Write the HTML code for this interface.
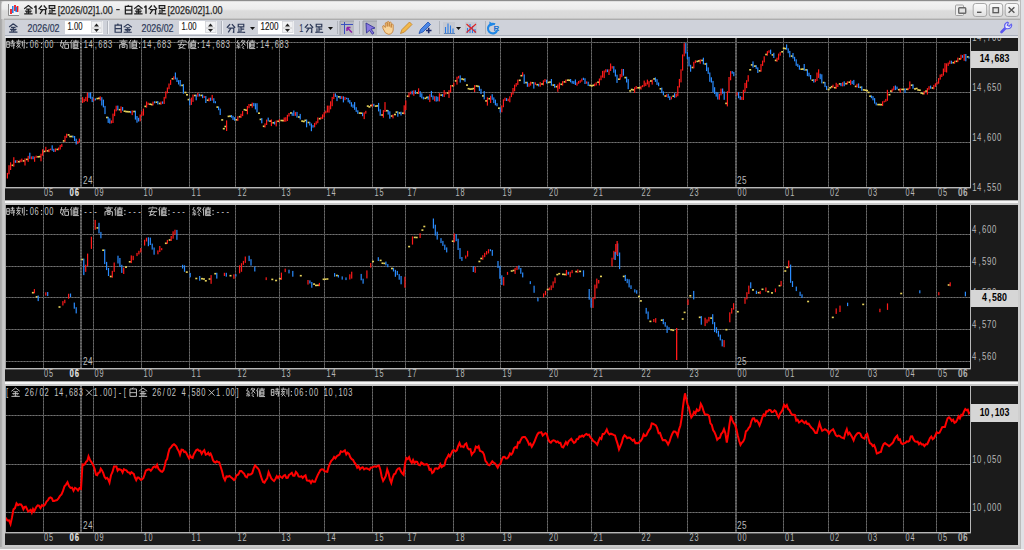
<!DOCTYPE html>
<html><head><meta charset="utf-8"><style>
html,body{margin:0;padding:0;width:1024px;height:550px;overflow:hidden;background:#d0d0d0;font-family:"Liberation Sans",sans-serif;}
svg{display:block}
</style></head><body>
<svg width="1024" height="550" viewBox="0 0 1024 550">
<defs>
<linearGradient id="tg" x1="0" y1="0" x2="0" y2="1">
<stop offset="0" stop-color="#d4d4d4"/><stop offset="0.07" stop-color="#f2f2f2"/><stop offset="0.45" stop-color="#ececec"/><stop offset="0.55" stop-color="#dcdcdc"/><stop offset="1" stop-color="#d8d8d8"/>
</linearGradient>
<linearGradient id="bg" x1="0" y1="0" x2="0" y2="1">
<stop offset="0" stop-color="#fcfcfc"/><stop offset="0.5" stop-color="#efefef"/><stop offset="1" stop-color="#dedede"/>
</linearGradient>
<clipPath id="c1"><rect x="6" y="38" width="964" height="149"/></clipPath>
<clipPath id="c2"><rect x="6" y="205" width="964" height="163"/></clipPath>
<clipPath id="c3"><rect x="6" y="386" width="964" height="146"/></clipPath>
</defs>

<rect x="0" y="0" width="1024" height="550" fill="#d0d0d0"/>
<rect x="0" y="0" width="1.5" height="548" fill="#a8a8a8"/>
<rect x="1.5" y="19" width="3.5" height="529" fill="#c8c8c8"/>
<rect x="1.5" y="19" width="0.6" height="529" fill="#9a9a9a"/>
<rect x="0" y="0" width="1018" height="1" fill="#8c8c8c"/>
<rect x="1020" y="0" width="1" height="550" fill="#bcbcbc"/>
<rect x="1021" y="0" width="3" height="550" fill="#e0e1e5"/>
<rect x="5" y="545" width="1015" height="2" fill="#cacaca"/>
<rect x="0" y="547" width="1020" height="2" fill="#c0c0c0"/>
<rect x="0" y="549" width="1024" height="1" fill="#f6f6f6"/>
<path d="M1.5 5Q1.5 1 5 1H1020V19H1.5Z" fill="url(#tg)"/>
<rect x="4" y="18" width="1016" height="1" fill="#c6c6c6"/>
<rect x="4" y="19" width="1016" height="1" fill="#adadad"/>
<rect x="9" y="4" width="10" height="11" fill="#f2f4f6"/>
<path d="M8.5 4V15.5H19" fill="none" stroke="#8a8a8a" stroke-width="1"/>
<path d="M11 9V14M15 5V11M17.5 6V12" stroke="#ee1c24" stroke-width="1.8"/>
<path d="M12.8 6V13M16.2 7V12" stroke="#1a80e8" stroke-width="1.5"/>
<path transform="translate(23.75,5.05) scale(0.930)" d="M5 0.5L0.5 4M5 0.5L9.5 4M2.5 4.5H7.5M1.5 6.5H8.5M5 4.5V9.5M3 7.3L3.6 8.5M7 7.3L6.4 8.5M0.5 9.5H9.5" fill="none" stroke="#1e1e1e" stroke-width="1.34"/>
<path d="M36 5.6V13.8M34.3 7.4L36 5.8" stroke="#1e1e1e" stroke-width="1.4" fill="none"/>
<path transform="translate(38.15,5.05) scale(0.930)" d="M4 0.5L0.5 4.5M6 0.5L9.5 4.5M2 5H8V9.5L7 9M5 5L2 9.5" fill="none" stroke="#1e1e1e" stroke-width="1.34"/>
<path transform="translate(47.35,5.05) scale(0.930)" d="M2 0.7H8V3.5H2ZM5 3.5V8.5M5 6H8.5M2.8 5V8.5M1 9.5C3 9 6 9.5 9.5 9.5" fill="none" stroke="#1e1e1e" stroke-width="1.34"/>
<text x="57.8" y="13.6" font-family="Liberation Sans" font-size="11.5" fill="#1e1e1e" stroke="#1e1e1e" stroke-width="0.25" textLength="55" lengthAdjust="spacingAndGlyphs">[2026/02]1.00</text>
<rect x="116.2" y="9.1" width="3.5" height="1.1" fill="#1e1e1e"/>
<path transform="translate(123.95,5.05) scale(0.930)" d="M5 0L4 1.5M1.5 1.5H8.5V9.5H1.5ZM1.5 5.5H8.5" fill="none" stroke="#1e1e1e" stroke-width="1.34"/>
<path transform="translate(133.75,5.05) scale(0.930)" d="M5 0.5L0.5 4M5 0.5L9.5 4M2.5 4.5H7.5M1.5 6.5H8.5M5 4.5V9.5M3 7.3L3.6 8.5M7 7.3L6.4 8.5M0.5 9.5H9.5" fill="none" stroke="#1e1e1e" stroke-width="1.34"/>
<path d="M146 5.6V13.8M144.3 7.4L146 5.8" stroke="#1e1e1e" stroke-width="1.4" fill="none"/>
<path transform="translate(148.15,5.05) scale(0.930)" d="M4 0.5L0.5 4.5M6 0.5L9.5 4.5M2 5H8V9.5L7 9M5 5L2 9.5" fill="none" stroke="#1e1e1e" stroke-width="1.34"/>
<path transform="translate(157.35,5.05) scale(0.930)" d="M2 0.7H8V3.5H2ZM5 3.5V8.5M5 6H8.5M2.8 5V8.5M1 9.5C3 9 6 9.5 9.5 9.5" fill="none" stroke="#1e1e1e" stroke-width="1.34"/>
<text x="167.6" y="13.6" font-family="Liberation Sans" font-size="11.5" fill="#1e1e1e" stroke="#1e1e1e" stroke-width="0.25" textLength="55" lengthAdjust="spacingAndGlyphs">[2026/02]1.00</text>
<rect x="955.5" y="5" width="8" height="10.5" rx="1" fill="#eeeeee" stroke="#9a9a9a" stroke-width="0.9"/>
<rect x="958.7" y="7.7" width="7" height="5.6" rx="0.8" fill="#e2e2e2" stroke="#6a6a6a" stroke-width="1.4"/>
<rect x="973.2" y="3.5" width="13.5" height="13" rx="2.5" fill="url(#bg)" stroke="#a8a8a8"/>
<rect x="989.2" y="3.5" width="13.5" height="13" rx="2.5" fill="url(#bg)" stroke="#a8a8a8"/>
<rect x="1005.2" y="3.5" width="13.5" height="13" rx="2.5" fill="url(#bg)" stroke="#a8a8a8"/>
<rect x="977" y="11.6" width="4.5" height="1.4" fill="#555"/>
<rect x="993" y="7.7" width="5.5" height="5" fill="#e4e4e4" stroke="#585858" stroke-width="1.3"/>
<path d="M1008.6 7.2L1014.4 12.8M1014.4 7.2L1008.6 12.8" stroke="#555" stroke-width="1.4"/>
<rect x="5" y="20" width="1013" height="15" fill="#cfd2da"/>
<rect x="5" y="35" width="1013" height="1" fill="#aab0bc"/>
<rect x="5" y="36" width="1013" height="2" fill="#e2e4e8"/>
<rect x="1018" y="20" width="2" height="525" fill="#cfcfcf"/>
<path transform="translate(8.70,23.30) scale(0.920)" d="M5 0.5L0.5 4M5 0.5L9.5 4M2.5 4.5H7.5M1.5 6.5H8.5M5 4.5V9.5M3 7.3L3.6 8.5M7 7.3L6.4 8.5M0.5 9.5H9.5" fill="none" stroke="#2e3a58" stroke-width="1.30"/>
<text x="27.5" y="32.3" font-family="Liberation Sans" font-size="10" fill="#2e3a58" stroke="#2e3a58" stroke-width="0.2" textLength="32" lengthAdjust="spacingAndGlyphs">2026/02</text>
<rect x="65" y="21" width="38" height="13" fill="#ffffff"/>
<rect x="91.5" y="21.5" width="10.5" height="11" fill="#f0f1f3" stroke="#d0d2d6" stroke-width="0.8"/>
<path d="M94 26.5L96.5 23.5L99 26.5Z" fill="#222"/><path d="M94 29L96.5 32L99 29Z" fill="#222"/>
<rect x="92" y="27.5" width="9" height="1" fill="#c8c8c8"/>
<text x="67.5" y="30.0" font-family="Liberation Sans" font-size="10" fill="#151515" stroke="#151515" stroke-width="0.15" textLength="15" lengthAdjust="spacingAndGlyphs">1.00</text>
<rect x="107" y="21" width="1" height="13" fill="#b0b4bc"/><rect x="108" y="21" width="1" height="13" fill="#eef0f4"/>
<path transform="translate(113.75,23.70) scale(0.900)" d="M5 0L4 1.5M1.5 1.5H8.5V9.5H1.5ZM1.5 5.5H8.5" fill="none" stroke="#2e3a58" stroke-width="1.33"/>
<path transform="translate(123.25,23.70) scale(0.900)" d="M5 0.5L0.5 4M5 0.5L9.5 4M2.5 4.5H7.5M1.5 6.5H8.5M5 4.5V9.5M3 7.3L3.6 8.5M7 7.3L6.4 8.5M0.5 9.5H9.5" fill="none" stroke="#2e3a58" stroke-width="1.33"/>
<text x="141.5" y="32.3" font-family="Liberation Sans" font-size="10" fill="#2e3a58" stroke="#2e3a58" stroke-width="0.2" textLength="32" lengthAdjust="spacingAndGlyphs">2026/02</text>
<rect x="179" y="21" width="38" height="13" fill="#ffffff"/>
<rect x="205.5" y="21.5" width="10.5" height="11" fill="#f0f1f3" stroke="#d0d2d6" stroke-width="0.8"/>
<path d="M208 26.5L210.5 23.5L213 26.5Z" fill="#222"/><path d="M208 29L210.5 32L213 29Z" fill="#222"/>
<rect x="206" y="27.5" width="9" height="1" fill="#c8c8c8"/>
<text x="181.5" y="30.0" font-family="Liberation Sans" font-size="10" fill="#151515" stroke="#151515" stroke-width="0.15" textLength="15" lengthAdjust="spacingAndGlyphs">1.00</text>
<rect x="221" y="21" width="1" height="13" fill="#b0b4bc"/><rect x="222" y="21" width="1" height="13" fill="#eef0f4"/>
<path transform="translate(226.40,23.60) scale(0.920)" d="M4 0.5L0.5 4.5M6 0.5L9.5 4.5M2 5H8V9.5L7 9M5 5L2 9.5" fill="none" stroke="#2e3a58" stroke-width="1.30"/>
<path transform="translate(236.40,23.60) scale(0.920)" d="M2 0.7H8V3.5H2ZM5 3.5V8.5M5 6H8.5M2.8 5V8.5M1 9.5C3 9 6 9.5 9.5 9.5" fill="none" stroke="#2e3a58" stroke-width="1.30"/>
<path d="M250 27L255 27L252.5 30Z" fill="#111"/>
<rect x="258" y="21" width="36" height="13" fill="#ffffff"/>
<rect x="282.5" y="21.5" width="10.5" height="11" fill="#f0f1f3" stroke="#d0d2d6" stroke-width="0.8"/>
<path d="M285 26.5L287.5 23.5L290 26.5Z" fill="#222"/><path d="M285 29L287.5 32L290 29Z" fill="#222"/>
<rect x="283" y="27.5" width="9" height="1" fill="#c8c8c8"/>
<text x="260.5" y="30.0" font-family="Liberation Sans" font-size="10" fill="#151515" stroke="#151515" stroke-width="0.15" textLength="18" lengthAdjust="spacingAndGlyphs">1200</text>
<text x="299.5" y="32.3" font-family="Liberation Sans" font-size="10" fill="#2e3a58" stroke="#2e3a58" stroke-width="0.2" textLength="3.6" lengthAdjust="spacingAndGlyphs">1</text>
<path transform="translate(304.40,23.60) scale(0.920)" d="M4 0.5L0.5 4.5M6 0.5L9.5 4.5M2 5H8V9.5L7 9M5 5L2 9.5" fill="none" stroke="#2e3a58" stroke-width="1.30"/>
<path transform="translate(314.40,23.60) scale(0.920)" d="M2 0.7H8V3.5H2ZM5 3.5V8.5M5 6H8.5M2.8 5V8.5M1 9.5C3 9 6 9.5 9.5 9.5" fill="none" stroke="#2e3a58" stroke-width="1.30"/>
<path d="M328 27L333 27L330.5 30Z" fill="#111"/>
<rect x="337" y="21" width="1" height="13" fill="#b0b4bc"/>
<rect x="340" y="21" width="14" height="14" fill="#b9bcc4"/><path d="M340 35V21H354" fill="none" stroke="#9a9ea6" stroke-width="1"/>
<path d="M344.5 22V34M341 24.5H353" stroke="#3a50c0" stroke-width="1"/><path d="M347 27.5L352 32.5M347 27.5H350.5M347 27.5V31" stroke="#9020a8" stroke-width="1.5"/>
<rect x="359" y="21" width="1" height="13" fill="#b0b4bc"/>
<rect x="363" y="21" width="14" height="14" fill="#b9bcc4"/><path d="M363 35V21H377" fill="none" stroke="#9a9ea6" stroke-width="1"/>
<path d="M366 23L375 28L371 29.2L374 33L372.3 34.2L369.5 30.3L366.5 33Z" fill="#8878e0" stroke="#2a2a90" stroke-width="0.8"/>
<path d="M383 28.5Q382 25 384 25.5L385.3 27.5V23Q386.2 21.8 387.2 23V26.5V22Q388.2 20.8 389.2 22V26.5V22.6Q390.2 21.5 391.2 22.6V27.5V24.6Q392.2 23.5 393.2 24.6V30Q392.5 34.3 388.5 34.3Q385 34.3 383 28.5Z" fill="#f8d49a" stroke="#c07a30" stroke-width="0.8"/>
<path d="M400.5 33.5L402 29.5L409.5 22L412 24.5L404.5 32Z" fill="#f2b84a" stroke="#c0802a" stroke-width="0.8"/>
<path d="M419 33.5L420.5 29.5L428 22L430.5 24.5L423 32Z" fill="#4a86e6" stroke="#2050b0" stroke-width="0.8"/><path d="M426 30.5H431.5M428.7 27.8V33.2" stroke="#1a2a70" stroke-width="1.6"/>
<rect x="439" y="21" width="1" height="13" fill="#b0b4bc"/>
<rect x="443" y="22" width="12" height="12" fill="#c6c9d1"/>
<path d="M445.5 33V27M448 33V23.5M450.5 33V25.5M453 33V28.5" stroke="#2a7ae6" stroke-width="1.1"/><path d="M444 33.5H455" stroke="#4070b0" stroke-width="0.8"/>
<path d="M456 27L461 27L458.5 30Z" fill="#111"/>
<rect x="465" y="22" width="12" height="12" fill="#c6c9d1"/>
<path d="M467.5 33V28M470 33V24M472.5 33V26M475 33V29" stroke="#2a7ae6" stroke-width="1.1"/><path d="M466.5 24L476 32.5M476 24L466.5 32.5" stroke="#e02424" stroke-width="1.1"/>
<rect x="485" y="21" width="1" height="13" fill="#b0b4bc"/>
<path d="M495 24.3A4.8 4.8 0 1 0 497.3 30.2" fill="none" stroke="#2088e6" stroke-width="2.1"/><path d="M489.3 21.5L494.5 24.7L489.7 26.5Z" fill="#2088e6"/>
<text x="493.6" y="31" font-family="Liberation Sans" font-size="8" font-weight="bold" fill="#2070d0">R</text>
<path d="M1001.5 32L1006.5 27" stroke="#5a56f0" stroke-width="2.6" stroke-linecap="round"/><path d="M1005.3 28.2Q1003.3 24.2 1007.2 22.2L1008.3 22.7L1007.3 25.2L1009.2 26.2L1011.2 24.2L1011.7 25.2Q1011.2 29.2 1006.7 28.7Z" fill="#ececff" stroke="#6060f0" stroke-width="1.2"/>
<rect x="5" y="200" width="1013" height="1" fill="#b0b0b0"/><rect x="5" y="201" width="1013" height="2" fill="#f6f6f6"/><rect x="5" y="203" width="1013" height="2" fill="#c6c6c6"/>
<rect x="5" y="381" width="1013" height="1" fill="#a8a8a8"/><rect x="5" y="382" width="1013" height="2" fill="#f6f6f6"/><rect x="5" y="384" width="1013" height="2" fill="#c6c6c6"/>
<rect x="5" y="38" width="1013" height="162" fill="#1b1b1b"/>
<rect x="6" y="38" width="964" height="149" fill="#000"/>
<g shape-rendering="crispEdges" stroke-width="1">
<line x1="6" y1="42.5" x2="970" y2="42.5" stroke="#525252"/>
<line x1="6" y1="42.5" x2="970" y2="42.5" stroke="#707070" stroke-dasharray="1 2"/>
<line x1="6" y1="92.5" x2="970" y2="92.5" stroke="#525252"/>
<line x1="6" y1="92.5" x2="970" y2="92.5" stroke="#707070" stroke-dasharray="1 2"/>
<line x1="6" y1="142.5" x2="970" y2="142.5" stroke="#525252"/>
<line x1="6" y1="142.5" x2="970" y2="142.5" stroke="#707070" stroke-dasharray="1 2"/>
<line x1="43.5" y1="38" x2="43.5" y2="187" stroke="#525252"/>
<line x1="43.5" y1="38" x2="43.5" y2="187" stroke="#6c6c6c" stroke-dasharray="1 2"/>
<line x1="93.5" y1="38" x2="93.5" y2="187" stroke="#525252"/>
<line x1="93.5" y1="38" x2="93.5" y2="187" stroke="#6c6c6c" stroke-dasharray="1 2"/>
<line x1="141.5" y1="38" x2="141.5" y2="187" stroke="#525252"/>
<line x1="141.5" y1="38" x2="141.5" y2="187" stroke="#6c6c6c" stroke-dasharray="1 2"/>
<line x1="189.5" y1="38" x2="189.5" y2="187" stroke="#525252"/>
<line x1="189.5" y1="38" x2="189.5" y2="187" stroke="#6c6c6c" stroke-dasharray="1 2"/>
<line x1="235.5" y1="38" x2="235.5" y2="187" stroke="#525252"/>
<line x1="235.5" y1="38" x2="235.5" y2="187" stroke="#6c6c6c" stroke-dasharray="1 2"/>
<line x1="279.5" y1="38" x2="279.5" y2="187" stroke="#525252"/>
<line x1="279.5" y1="38" x2="279.5" y2="187" stroke="#6c6c6c" stroke-dasharray="1 2"/>
<line x1="324.5" y1="38" x2="324.5" y2="187" stroke="#525252"/>
<line x1="324.5" y1="38" x2="324.5" y2="187" stroke="#6c6c6c" stroke-dasharray="1 2"/>
<line x1="372.5" y1="38" x2="372.5" y2="187" stroke="#525252"/>
<line x1="372.5" y1="38" x2="372.5" y2="187" stroke="#6c6c6c" stroke-dasharray="1 2"/>
<line x1="405.5" y1="38" x2="405.5" y2="187" stroke="#525252"/>
<line x1="405.5" y1="38" x2="405.5" y2="187" stroke="#6c6c6c" stroke-dasharray="1 2"/>
<line x1="453.5" y1="38" x2="453.5" y2="187" stroke="#525252"/>
<line x1="453.5" y1="38" x2="453.5" y2="187" stroke="#6c6c6c" stroke-dasharray="1 2"/>
<line x1="500.5" y1="38" x2="500.5" y2="187" stroke="#525252"/>
<line x1="500.5" y1="38" x2="500.5" y2="187" stroke="#6c6c6c" stroke-dasharray="1 2"/>
<line x1="547.5" y1="38" x2="547.5" y2="187" stroke="#525252"/>
<line x1="547.5" y1="38" x2="547.5" y2="187" stroke="#6c6c6c" stroke-dasharray="1 2"/>
<line x1="591.5" y1="38" x2="591.5" y2="187" stroke="#525252"/>
<line x1="591.5" y1="38" x2="591.5" y2="187" stroke="#6c6c6c" stroke-dasharray="1 2"/>
<line x1="639.5" y1="38" x2="639.5" y2="187" stroke="#525252"/>
<line x1="639.5" y1="38" x2="639.5" y2="187" stroke="#6c6c6c" stroke-dasharray="1 2"/>
<line x1="687.5" y1="38" x2="687.5" y2="187" stroke="#525252"/>
<line x1="687.5" y1="38" x2="687.5" y2="187" stroke="#6c6c6c" stroke-dasharray="1 2"/>
<line x1="783.5" y1="38" x2="783.5" y2="187" stroke="#525252"/>
<line x1="783.5" y1="38" x2="783.5" y2="187" stroke="#6c6c6c" stroke-dasharray="1 2"/>
<line x1="828.5" y1="38" x2="828.5" y2="187" stroke="#525252"/>
<line x1="828.5" y1="38" x2="828.5" y2="187" stroke="#6c6c6c" stroke-dasharray="1 2"/>
<line x1="866.5" y1="38" x2="866.5" y2="187" stroke="#525252"/>
<line x1="866.5" y1="38" x2="866.5" y2="187" stroke="#6c6c6c" stroke-dasharray="1 2"/>
<line x1="903.5" y1="38" x2="903.5" y2="187" stroke="#525252"/>
<line x1="903.5" y1="38" x2="903.5" y2="187" stroke="#6c6c6c" stroke-dasharray="1 2"/>
<line x1="936.5" y1="38" x2="936.5" y2="187" stroke="#525252"/>
<line x1="936.5" y1="38" x2="936.5" y2="187" stroke="#6c6c6c" stroke-dasharray="1 2"/>
<rect x="80" y="38" width="2" height="149" fill="#4e4e4e"/>
<line x1="81" y1="38" x2="81" y2="187" stroke="#686868" stroke-width="2" stroke-dasharray="1 2"/>
<rect x="735" y="38" width="2" height="149" fill="#4e4e4e"/>
<line x1="736" y1="38" x2="736" y2="187" stroke="#686868" stroke-width="2" stroke-dasharray="1 2"/>
</g>
<rect x="5" y="38" width="1" height="149" fill="#a4a4a4"/>
<rect x="5" y="188" width="966" height="1" fill="#5a5a5a"/>
<rect x="5" y="187" width="966" height="1" fill="#b8b8b8"/><rect x="970" y="38" width="1" height="150" fill="#b8b8b8"/>
<text transform="translate(43.50,195.70) scale(0.7,1)" x="0.58 7.86" y="0" font-family="Liberation Sans" font-size="10.5" fill="#b8b8b8" xml:space="preserve">05</text>
<text transform="translate(69.00,195.70) scale(0.7,1)" x="0.58 7.86" y="0" font-family="Liberation Sans" font-size="10.5" fill="#b8b8b8" xml:space="preserve">06</text>
<text transform="translate(94.00,195.70) scale(0.7,1)" x="0.58 7.86" y="0" font-family="Liberation Sans" font-size="10.5" fill="#b8b8b8" xml:space="preserve">09</text>
<text transform="translate(143.00,195.70) scale(0.7,1)" x="0.79 7.86" y="0" font-family="Liberation Sans" font-size="10.5" fill="#b8b8b8" xml:space="preserve">10</text>
<text transform="translate(191.00,195.70) scale(0.7,1)" x="0.79 8.08" y="0" font-family="Liberation Sans" font-size="10.5" fill="#b8b8b8" xml:space="preserve">11</text>
<text transform="translate(237.00,195.70) scale(0.7,1)" x="0.79 7.86" y="0" font-family="Liberation Sans" font-size="10.5" fill="#b8b8b8" xml:space="preserve">12</text>
<text transform="translate(281.00,195.70) scale(0.7,1)" x="0.79 7.86" y="0" font-family="Liberation Sans" font-size="10.5" fill="#b8b8b8" xml:space="preserve">13</text>
<text transform="translate(326.00,195.70) scale(0.7,1)" x="0.79 7.86" y="0" font-family="Liberation Sans" font-size="10.5" fill="#b8b8b8" xml:space="preserve">14</text>
<text transform="translate(374.00,195.70) scale(0.7,1)" x="0.79 7.86" y="0" font-family="Liberation Sans" font-size="10.5" fill="#b8b8b8" xml:space="preserve">15</text>
<text transform="translate(407.00,195.70) scale(0.7,1)" x="0.79 7.86" y="0" font-family="Liberation Sans" font-size="10.5" fill="#b8b8b8" xml:space="preserve">17</text>
<text transform="translate(455.00,195.70) scale(0.7,1)" x="0.79 7.86" y="0" font-family="Liberation Sans" font-size="10.5" fill="#b8b8b8" xml:space="preserve">18</text>
<text transform="translate(502.00,195.70) scale(0.7,1)" x="0.79 7.86" y="0" font-family="Liberation Sans" font-size="10.5" fill="#b8b8b8" xml:space="preserve">19</text>
<text transform="translate(548.50,195.70) scale(0.7,1)" x="0.58 7.86" y="0" font-family="Liberation Sans" font-size="10.5" fill="#b8b8b8" xml:space="preserve">20</text>
<text transform="translate(593.00,195.70) scale(0.7,1)" x="0.58 8.08" y="0" font-family="Liberation Sans" font-size="10.5" fill="#b8b8b8" xml:space="preserve">21</text>
<text transform="translate(641.00,195.70) scale(0.7,1)" x="0.58 7.86" y="0" font-family="Liberation Sans" font-size="10.5" fill="#b8b8b8" xml:space="preserve">22</text>
<text transform="translate(689.00,195.70) scale(0.7,1)" x="0.58 7.86" y="0" font-family="Liberation Sans" font-size="10.5" fill="#b8b8b8" xml:space="preserve">23</text>
<text transform="translate(737.00,195.70) scale(0.7,1)" x="0.58 7.86" y="0" font-family="Liberation Sans" font-size="10.5" fill="#b8b8b8" xml:space="preserve">00</text>
<text transform="translate(784.50,195.70) scale(0.7,1)" x="0.58 8.08" y="0" font-family="Liberation Sans" font-size="10.5" fill="#b8b8b8" xml:space="preserve">01</text>
<text transform="translate(829.50,195.70) scale(0.7,1)" x="0.58 7.86" y="0" font-family="Liberation Sans" font-size="10.5" fill="#b8b8b8" xml:space="preserve">02</text>
<text transform="translate(867.50,195.70) scale(0.7,1)" x="0.58 7.86" y="0" font-family="Liberation Sans" font-size="10.5" fill="#b8b8b8" xml:space="preserve">03</text>
<text transform="translate(905.00,195.70) scale(0.7,1)" x="0.58 7.86" y="0" font-family="Liberation Sans" font-size="10.5" fill="#b8b8b8" xml:space="preserve">04</text>
<text transform="translate(937.50,195.70) scale(0.7,1)" x="0.58 7.86" y="0" font-family="Liberation Sans" font-size="10.5" fill="#b8b8b8" xml:space="preserve">05</text>
<text transform="translate(957.50,195.70) scale(0.7,1)" x="0.58 7.86" y="0" font-family="Liberation Sans" font-size="10.5" fill="#b8b8b8" xml:space="preserve">06</text>
<text transform="translate(69.40,195.70) scale(0.7,1)" x="0.58 7.86" y="0" font-family="Liberation Sans" font-size="10.5" fill="#dcdcdc" font-weight="bold" xml:space="preserve">06</text>
<text transform="translate(958.00,195.70) scale(0.7,1)" x="0.58 7.86" y="0" font-family="Liberation Sans" font-size="10.5" fill="#b8b8b8" xml:space="preserve">06</text>
<text transform="translate(82.50,184.00) scale(0.75,1)" x="0.53 7.20" y="0" font-family="Liberation Sans" font-size="11" fill="#b8b8b8" xml:space="preserve">24</text>
<text transform="translate(736.50,184.00) scale(0.75,1)" x="0.53 7.20" y="0" font-family="Liberation Sans" font-size="11" fill="#b8b8b8" xml:space="preserve">25</text>
<svg x="971" y="38" width="47" height="162" overflow="hidden">
<text transform="translate(0.70,3.00) scale(0.75,1)" x="0.73 7.20 15.67 20.53 27.20 33.87" y="0" font-family="Liberation Sans" font-size="10.3" fill="#b8b8b8" xml:space="preserve">14,700</text>
<text transform="translate(0.70,53.00) scale(0.75,1)" x="0.73 7.20 15.67 20.53 27.20 33.87" y="0" font-family="Liberation Sans" font-size="10.3" fill="#b8b8b8" xml:space="preserve">14,650</text>
<text transform="translate(0.70,103.00) scale(0.75,1)" x="0.73 7.20 15.67 20.53 27.20 33.87" y="0" font-family="Liberation Sans" font-size="10.3" fill="#b8b8b8" xml:space="preserve">14,600</text>
<text transform="translate(0.70,153.00) scale(0.75,1)" x="0.73 7.20 15.67 20.53 27.20 33.87" y="0" font-family="Liberation Sans" font-size="10.3" fill="#b8b8b8" xml:space="preserve">14,550</text>
</svg>
<rect x="971" y="51" width="47" height="17" fill="#d6d6d6"/>
<text transform="translate(979.20,62.40) scale(0.8,1)" x="0.69 6.75 14.69 19.25 25.50 31.75" y="0" font-family="Liberation Sans" font-size="11" fill="#000" font-weight="bold" xml:space="preserve">14,683</text>
<path transform="translate(6.05,39.55) scale(0.930)" d="M0.7 2H3.5V8.5H0.7ZM0.7 5H3.5M5 1.8H9M7 0.3V4M4.5 4H9.7M4.5 6H9.7M8.3 4.5V9.5L7.5 9.2M6 7L6.6 8" fill="none" stroke="#c4c4c4" stroke-width="1.02"/>
<path transform="translate(15.85,39.55) scale(0.930)" d="M3 0V1.5M0.5 1.8H6M3 2L1 4.5H5M4 3.5L0.5 8M2.5 6.5L5.5 9.5M4.5 5.5L1.5 9.5M7 1.5V7.5M9 0.3V9.5L8.2 9" fill="none" stroke="#c4c4c4" stroke-width="1.02"/>
<rect x="26.25" y="42.96" width="1.2" height="1.2" fill="#c4c4c4"/><rect x="26.25" y="46.70" width="1.2" height="1.2" fill="#c4c4c4"/>
<rect x="40.95" y="42.96" width="1.2" height="1.2" fill="#c4c4c4"/><rect x="40.95" y="46.70" width="1.2" height="1.2" fill="#c4c4c4"/>
<text transform="translate(25.40,48.00) scale(0.75,1)" x="-0.81 5.73 12.26 18.79 25.33 31.86 38.39" y="0" font-family="Liberation Sans" font-size="10" fill="#c4c4c4" xml:space="preserve"> 06 00 </text>
<path transform="translate(59.95,39.55) scale(0.930)" d="M2 0.5L0.5 7L4 9.5M0.3 3.5H4.2L2.5 9.5M6.5 0.5L5 3.5H9L8.5 2.5M5.2 5H9.2V9.5H5.2Z" fill="none" stroke="#c4c4c4" stroke-width="1.02"/>
<path transform="translate(69.75,39.55) scale(0.930)" d="M2.5 0.3L0.5 4M1.6 3V9.8M3.5 1.7H9.7M6.5 0.3V2.5M4.6 3H8.6V8.3H4.6ZM4.6 5H8.6M4.6 6.7H8.6M3.6 3V9.7H9.8" fill="none" stroke="#c4c4c4" stroke-width="1.02"/>
<rect x="80.15" y="42.96" width="1.2" height="1.2" fill="#c4c4c4"/><rect x="80.15" y="46.70" width="1.2" height="1.2" fill="#c4c4c4"/>
<text transform="translate(79.30,48.00) scale(0.75,1)" x="-0.81 5.93 12.26 20.59 25.33 31.86 38.39 44.93" y="0" font-family="Liberation Sans" font-size="10" fill="#c4c4c4" xml:space="preserve"> 14,683 </text>
<path transform="translate(118.75,39.55) scale(0.930)" d="M5 0V1.2M0.5 1.5H9.5M3 2.5H7V4.3H3ZM1 9.8V5.5H9V9.8L8.2 9.5M3.5 6.7H6.5V8.5H3.5Z" fill="none" stroke="#c4c4c4" stroke-width="1.02"/>
<path transform="translate(128.55,39.55) scale(0.930)" d="M2.5 0.3L0.5 4M1.6 3V9.8M3.5 1.7H9.7M6.5 0.3V2.5M4.6 3H8.6V8.3H4.6ZM4.6 5H8.6M4.6 6.7H8.6M3.6 3V9.7H9.8" fill="none" stroke="#c4c4c4" stroke-width="1.02"/>
<rect x="138.95" y="42.96" width="1.2" height="1.2" fill="#c4c4c4"/><rect x="138.95" y="46.70" width="1.2" height="1.2" fill="#c4c4c4"/>
<text transform="translate(138.10,48.00) scale(0.75,1)" x="-0.81 5.93 12.26 20.59 25.33 31.86 38.39 44.93" y="0" font-family="Liberation Sans" font-size="10" fill="#c4c4c4" xml:space="preserve"> 14,683 </text>
<path transform="translate(177.55,39.55) scale(0.930)" d="M5 0V1.2M0.8 3V1.5H9.2V3M0.3 5.5H9.7M4.5 2.5L2 8.3C5 8.8 7 9.3 8.5 9.8M7 5.5C6 8 4 9.2 1 9.8" fill="none" stroke="#c4c4c4" stroke-width="1.02"/>
<path transform="translate(187.35,39.55) scale(0.930)" d="M2.5 0.3L0.5 4M1.6 3V9.8M3.5 1.7H9.7M6.5 0.3V2.5M4.6 3H8.6V8.3H4.6ZM4.6 5H8.6M4.6 6.7H8.6M3.6 3V9.7H9.8" fill="none" stroke="#c4c4c4" stroke-width="1.02"/>
<rect x="197.75" y="42.96" width="1.2" height="1.2" fill="#c4c4c4"/><rect x="197.75" y="46.70" width="1.2" height="1.2" fill="#c4c4c4"/>
<text transform="translate(196.90,48.00) scale(0.75,1)" x="-0.81 5.93 12.26 20.59 25.33 31.86 38.39 44.93" y="0" font-family="Liberation Sans" font-size="10" fill="#c4c4c4" xml:space="preserve"> 14,683 </text>
<path transform="translate(236.35,39.55) scale(0.930)" d="M2 0.5L0.5 3.5L3 4L0.5 7H4.3M3 4.5L3.5 5.5M2.2 7V9.8M1 8L0.5 9.3M3.5 8L4 9.3M6.5 0.3L5 3M6 1.5H9.5L5.5 6.5M6.5 2.5L9.8 6.3M6.5 6.8L8 7.8M6 8.5L8.5 9.8" fill="none" stroke="#c4c4c4" stroke-width="1.02"/>
<path transform="translate(246.15,39.55) scale(0.930)" d="M2.5 0.3L0.5 4M1.6 3V9.8M3.5 1.7H9.7M6.5 0.3V2.5M4.6 3H8.6V8.3H4.6ZM4.6 5H8.6M4.6 6.7H8.6M3.6 3V9.7H9.8" fill="none" stroke="#c4c4c4" stroke-width="1.02"/>
<rect x="256.55" y="42.96" width="1.2" height="1.2" fill="#c4c4c4"/><rect x="256.55" y="46.70" width="1.2" height="1.2" fill="#c4c4c4"/>
<text transform="translate(255.70,48.00) scale(0.75,1)" x="-0.81 5.93 12.26 20.59 25.33 31.86 38.39" y="0" font-family="Liberation Sans" font-size="10" fill="#c4c4c4" xml:space="preserve"> 14,683</text>
<rect x="5" y="205" width="1013" height="176" fill="#1b1b1b"/>
<rect x="6" y="205" width="964" height="163" fill="#000"/>
<g shape-rendering="crispEdges" stroke-width="1">
<line x1="6" y1="234.5" x2="970" y2="234.5" stroke="#525252"/>
<line x1="6" y1="234.5" x2="970" y2="234.5" stroke="#707070" stroke-dasharray="1 2"/>
<line x1="6" y1="266.5" x2="970" y2="266.5" stroke="#525252"/>
<line x1="6" y1="266.5" x2="970" y2="266.5" stroke="#707070" stroke-dasharray="1 2"/>
<line x1="6" y1="297.5" x2="970" y2="297.5" stroke="#525252"/>
<line x1="6" y1="297.5" x2="970" y2="297.5" stroke="#707070" stroke-dasharray="1 2"/>
<line x1="6" y1="329.5" x2="970" y2="329.5" stroke="#525252"/>
<line x1="6" y1="329.5" x2="970" y2="329.5" stroke="#707070" stroke-dasharray="1 2"/>
<line x1="6" y1="361.5" x2="970" y2="361.5" stroke="#525252"/>
<line x1="6" y1="361.5" x2="970" y2="361.5" stroke="#707070" stroke-dasharray="1 2"/>
<line x1="43.5" y1="205" x2="43.5" y2="368" stroke="#525252"/>
<line x1="43.5" y1="205" x2="43.5" y2="368" stroke="#6c6c6c" stroke-dasharray="1 2"/>
<line x1="93.5" y1="205" x2="93.5" y2="368" stroke="#525252"/>
<line x1="93.5" y1="205" x2="93.5" y2="368" stroke="#6c6c6c" stroke-dasharray="1 2"/>
<line x1="141.5" y1="205" x2="141.5" y2="368" stroke="#525252"/>
<line x1="141.5" y1="205" x2="141.5" y2="368" stroke="#6c6c6c" stroke-dasharray="1 2"/>
<line x1="189.5" y1="205" x2="189.5" y2="368" stroke="#525252"/>
<line x1="189.5" y1="205" x2="189.5" y2="368" stroke="#6c6c6c" stroke-dasharray="1 2"/>
<line x1="235.5" y1="205" x2="235.5" y2="368" stroke="#525252"/>
<line x1="235.5" y1="205" x2="235.5" y2="368" stroke="#6c6c6c" stroke-dasharray="1 2"/>
<line x1="279.5" y1="205" x2="279.5" y2="368" stroke="#525252"/>
<line x1="279.5" y1="205" x2="279.5" y2="368" stroke="#6c6c6c" stroke-dasharray="1 2"/>
<line x1="324.5" y1="205" x2="324.5" y2="368" stroke="#525252"/>
<line x1="324.5" y1="205" x2="324.5" y2="368" stroke="#6c6c6c" stroke-dasharray="1 2"/>
<line x1="372.5" y1="205" x2="372.5" y2="368" stroke="#525252"/>
<line x1="372.5" y1="205" x2="372.5" y2="368" stroke="#6c6c6c" stroke-dasharray="1 2"/>
<line x1="405.5" y1="205" x2="405.5" y2="368" stroke="#525252"/>
<line x1="405.5" y1="205" x2="405.5" y2="368" stroke="#6c6c6c" stroke-dasharray="1 2"/>
<line x1="453.5" y1="205" x2="453.5" y2="368" stroke="#525252"/>
<line x1="453.5" y1="205" x2="453.5" y2="368" stroke="#6c6c6c" stroke-dasharray="1 2"/>
<line x1="500.5" y1="205" x2="500.5" y2="368" stroke="#525252"/>
<line x1="500.5" y1="205" x2="500.5" y2="368" stroke="#6c6c6c" stroke-dasharray="1 2"/>
<line x1="547.5" y1="205" x2="547.5" y2="368" stroke="#525252"/>
<line x1="547.5" y1="205" x2="547.5" y2="368" stroke="#6c6c6c" stroke-dasharray="1 2"/>
<line x1="591.5" y1="205" x2="591.5" y2="368" stroke="#525252"/>
<line x1="591.5" y1="205" x2="591.5" y2="368" stroke="#6c6c6c" stroke-dasharray="1 2"/>
<line x1="639.5" y1="205" x2="639.5" y2="368" stroke="#525252"/>
<line x1="639.5" y1="205" x2="639.5" y2="368" stroke="#6c6c6c" stroke-dasharray="1 2"/>
<line x1="687.5" y1="205" x2="687.5" y2="368" stroke="#525252"/>
<line x1="687.5" y1="205" x2="687.5" y2="368" stroke="#6c6c6c" stroke-dasharray="1 2"/>
<line x1="783.5" y1="205" x2="783.5" y2="368" stroke="#525252"/>
<line x1="783.5" y1="205" x2="783.5" y2="368" stroke="#6c6c6c" stroke-dasharray="1 2"/>
<line x1="828.5" y1="205" x2="828.5" y2="368" stroke="#525252"/>
<line x1="828.5" y1="205" x2="828.5" y2="368" stroke="#6c6c6c" stroke-dasharray="1 2"/>
<line x1="866.5" y1="205" x2="866.5" y2="368" stroke="#525252"/>
<line x1="866.5" y1="205" x2="866.5" y2="368" stroke="#6c6c6c" stroke-dasharray="1 2"/>
<line x1="903.5" y1="205" x2="903.5" y2="368" stroke="#525252"/>
<line x1="903.5" y1="205" x2="903.5" y2="368" stroke="#6c6c6c" stroke-dasharray="1 2"/>
<line x1="936.5" y1="205" x2="936.5" y2="368" stroke="#525252"/>
<line x1="936.5" y1="205" x2="936.5" y2="368" stroke="#6c6c6c" stroke-dasharray="1 2"/>
<rect x="80" y="205" width="2" height="163" fill="#4e4e4e"/>
<line x1="81" y1="205" x2="81" y2="368" stroke="#686868" stroke-width="2" stroke-dasharray="1 2"/>
<rect x="735" y="205" width="2" height="163" fill="#4e4e4e"/>
<line x1="736" y1="205" x2="736" y2="368" stroke="#686868" stroke-width="2" stroke-dasharray="1 2"/>
</g>
<rect x="5" y="205" width="1" height="163" fill="#a4a4a4"/>
<rect x="5" y="369" width="966" height="1" fill="#5a5a5a"/>
<rect x="5" y="368" width="966" height="1" fill="#b8b8b8"/><rect x="970" y="205" width="1" height="164" fill="#b8b8b8"/>
<text transform="translate(43.50,376.70) scale(0.7,1)" x="0.58 7.86" y="0" font-family="Liberation Sans" font-size="10.5" fill="#b8b8b8" xml:space="preserve">05</text>
<text transform="translate(69.00,376.70) scale(0.7,1)" x="0.58 7.86" y="0" font-family="Liberation Sans" font-size="10.5" fill="#b8b8b8" xml:space="preserve">06</text>
<text transform="translate(94.00,376.70) scale(0.7,1)" x="0.58 7.86" y="0" font-family="Liberation Sans" font-size="10.5" fill="#b8b8b8" xml:space="preserve">09</text>
<text transform="translate(143.00,376.70) scale(0.7,1)" x="0.79 7.86" y="0" font-family="Liberation Sans" font-size="10.5" fill="#b8b8b8" xml:space="preserve">10</text>
<text transform="translate(191.00,376.70) scale(0.7,1)" x="0.79 8.08" y="0" font-family="Liberation Sans" font-size="10.5" fill="#b8b8b8" xml:space="preserve">11</text>
<text transform="translate(237.00,376.70) scale(0.7,1)" x="0.79 7.86" y="0" font-family="Liberation Sans" font-size="10.5" fill="#b8b8b8" xml:space="preserve">12</text>
<text transform="translate(281.00,376.70) scale(0.7,1)" x="0.79 7.86" y="0" font-family="Liberation Sans" font-size="10.5" fill="#b8b8b8" xml:space="preserve">13</text>
<text transform="translate(326.00,376.70) scale(0.7,1)" x="0.79 7.86" y="0" font-family="Liberation Sans" font-size="10.5" fill="#b8b8b8" xml:space="preserve">14</text>
<text transform="translate(374.00,376.70) scale(0.7,1)" x="0.79 7.86" y="0" font-family="Liberation Sans" font-size="10.5" fill="#b8b8b8" xml:space="preserve">15</text>
<text transform="translate(407.00,376.70) scale(0.7,1)" x="0.79 7.86" y="0" font-family="Liberation Sans" font-size="10.5" fill="#b8b8b8" xml:space="preserve">17</text>
<text transform="translate(455.00,376.70) scale(0.7,1)" x="0.79 7.86" y="0" font-family="Liberation Sans" font-size="10.5" fill="#b8b8b8" xml:space="preserve">18</text>
<text transform="translate(502.00,376.70) scale(0.7,1)" x="0.79 7.86" y="0" font-family="Liberation Sans" font-size="10.5" fill="#b8b8b8" xml:space="preserve">19</text>
<text transform="translate(548.50,376.70) scale(0.7,1)" x="0.58 7.86" y="0" font-family="Liberation Sans" font-size="10.5" fill="#b8b8b8" xml:space="preserve">20</text>
<text transform="translate(593.00,376.70) scale(0.7,1)" x="0.58 8.08" y="0" font-family="Liberation Sans" font-size="10.5" fill="#b8b8b8" xml:space="preserve">21</text>
<text transform="translate(641.00,376.70) scale(0.7,1)" x="0.58 7.86" y="0" font-family="Liberation Sans" font-size="10.5" fill="#b8b8b8" xml:space="preserve">22</text>
<text transform="translate(689.00,376.70) scale(0.7,1)" x="0.58 7.86" y="0" font-family="Liberation Sans" font-size="10.5" fill="#b8b8b8" xml:space="preserve">23</text>
<text transform="translate(737.00,376.70) scale(0.7,1)" x="0.58 7.86" y="0" font-family="Liberation Sans" font-size="10.5" fill="#b8b8b8" xml:space="preserve">00</text>
<text transform="translate(784.50,376.70) scale(0.7,1)" x="0.58 8.08" y="0" font-family="Liberation Sans" font-size="10.5" fill="#b8b8b8" xml:space="preserve">01</text>
<text transform="translate(829.50,376.70) scale(0.7,1)" x="0.58 7.86" y="0" font-family="Liberation Sans" font-size="10.5" fill="#b8b8b8" xml:space="preserve">02</text>
<text transform="translate(867.50,376.70) scale(0.7,1)" x="0.58 7.86" y="0" font-family="Liberation Sans" font-size="10.5" fill="#b8b8b8" xml:space="preserve">03</text>
<text transform="translate(905.00,376.70) scale(0.7,1)" x="0.58 7.86" y="0" font-family="Liberation Sans" font-size="10.5" fill="#b8b8b8" xml:space="preserve">04</text>
<text transform="translate(937.50,376.70) scale(0.7,1)" x="0.58 7.86" y="0" font-family="Liberation Sans" font-size="10.5" fill="#b8b8b8" xml:space="preserve">05</text>
<text transform="translate(957.50,376.70) scale(0.7,1)" x="0.58 7.86" y="0" font-family="Liberation Sans" font-size="10.5" fill="#b8b8b8" xml:space="preserve">06</text>
<text transform="translate(69.40,376.70) scale(0.7,1)" x="0.58 7.86" y="0" font-family="Liberation Sans" font-size="10.5" fill="#dcdcdc" font-weight="bold" xml:space="preserve">06</text>
<text transform="translate(958.00,376.70) scale(0.7,1)" x="0.58 7.86" y="0" font-family="Liberation Sans" font-size="10.5" fill="#b8b8b8" xml:space="preserve">06</text>
<text transform="translate(82.50,365.00) scale(0.75,1)" x="0.53 7.20" y="0" font-family="Liberation Sans" font-size="11" fill="#b8b8b8" xml:space="preserve">24</text>
<text transform="translate(736.50,365.00) scale(0.75,1)" x="0.53 7.20" y="0" font-family="Liberation Sans" font-size="11" fill="#b8b8b8" xml:space="preserve">25</text>
<svg x="971" y="205" width="47" height="176" overflow="hidden">
<text transform="translate(0.70,28.00) scale(0.75,1)" x="0.53 9.00 13.87 20.53 27.20" y="0" font-family="Liberation Sans" font-size="10.3" fill="#b8b8b8" xml:space="preserve">4,600</text>
<text transform="translate(0.70,60.00) scale(0.75,1)" x="0.53 9.00 13.87 20.53 27.20" y="0" font-family="Liberation Sans" font-size="10.3" fill="#b8b8b8" xml:space="preserve">4,590</text>
<text transform="translate(0.70,91.00) scale(0.75,1)" x="0.53 9.00 13.87 20.53 27.20" y="0" font-family="Liberation Sans" font-size="10.3" fill="#b8b8b8" xml:space="preserve">4,580</text>
<text transform="translate(0.70,123.00) scale(0.75,1)" x="0.53 9.00 13.87 20.53 27.20" y="0" font-family="Liberation Sans" font-size="10.3" fill="#b8b8b8" xml:space="preserve">4,570</text>
<text transform="translate(0.70,155.00) scale(0.75,1)" x="0.53 9.00 13.87 20.53 27.20" y="0" font-family="Liberation Sans" font-size="10.3" fill="#b8b8b8" xml:space="preserve">4,560</text>
</svg>
<rect x="971" y="290" width="47" height="17" fill="#d6d6d6"/>
<text transform="translate(981.70,301.40) scale(0.8,1)" x="0.50 8.44 13.00 19.25 25.50" y="0" font-family="Liberation Sans" font-size="11" fill="#000" font-weight="bold" xml:space="preserve">4,580</text>
<path transform="translate(6.05,206.55) scale(0.930)" d="M0.7 2H3.5V8.5H0.7ZM0.7 5H3.5M5 1.8H9M7 0.3V4M4.5 4H9.7M4.5 6H9.7M8.3 4.5V9.5L7.5 9.2M6 7L6.6 8" fill="none" stroke="#c4c4c4" stroke-width="1.02"/>
<path transform="translate(15.85,206.55) scale(0.930)" d="M3 0V1.5M0.5 1.8H6M3 2L1 4.5H5M4 3.5L0.5 8M2.5 6.5L5.5 9.5M4.5 5.5L1.5 9.5M7 1.5V7.5M9 0.3V9.5L8.2 9" fill="none" stroke="#c4c4c4" stroke-width="1.02"/>
<rect x="26.25" y="209.96" width="1.2" height="1.2" fill="#c4c4c4"/><rect x="26.25" y="213.70" width="1.2" height="1.2" fill="#c4c4c4"/>
<rect x="40.95" y="209.96" width="1.2" height="1.2" fill="#c4c4c4"/><rect x="40.95" y="213.70" width="1.2" height="1.2" fill="#c4c4c4"/>
<text transform="translate(25.40,215.00) scale(0.75,1)" x="-0.81 5.73 12.26 18.79 25.33 31.86 38.39" y="0" font-family="Liberation Sans" font-size="10" fill="#c4c4c4" xml:space="preserve"> 06 00 </text>
<path transform="translate(59.95,206.55) scale(0.930)" d="M2 0.5L0.5 7L4 9.5M0.3 3.5H4.2L2.5 9.5M6.5 0.5L5 3.5H9L8.5 2.5M5.2 5H9.2V9.5H5.2Z" fill="none" stroke="#c4c4c4" stroke-width="1.02"/>
<path transform="translate(69.75,206.55) scale(0.930)" d="M2.5 0.3L0.5 4M1.6 3V9.8M3.5 1.7H9.7M6.5 0.3V2.5M4.6 3H8.6V8.3H4.6ZM4.6 5H8.6M4.6 6.7H8.6M3.6 3V9.7H9.8" fill="none" stroke="#c4c4c4" stroke-width="1.02"/>
<rect x="80.15" y="209.96" width="1.2" height="1.2" fill="#c4c4c4"/><rect x="80.15" y="213.70" width="1.2" height="1.2" fill="#c4c4c4"/>
<text transform="translate(79.30,215.00) scale(0.75,1)" x="-0.81 6.73 13.26 19.79 25.33" y="0" font-family="Liberation Sans" font-size="10" fill="#c4c4c4" xml:space="preserve"> --- </text>
<path transform="translate(104.05,206.55) scale(0.930)" d="M5 0V1.2M0.5 1.5H9.5M3 2.5H7V4.3H3ZM1 9.8V5.5H9V9.8L8.2 9.5M3.5 6.7H6.5V8.5H3.5Z" fill="none" stroke="#c4c4c4" stroke-width="1.02"/>
<path transform="translate(113.85,206.55) scale(0.930)" d="M2.5 0.3L0.5 4M1.6 3V9.8M3.5 1.7H9.7M6.5 0.3V2.5M4.6 3H8.6V8.3H4.6ZM4.6 5H8.6M4.6 6.7H8.6M3.6 3V9.7H9.8" fill="none" stroke="#c4c4c4" stroke-width="1.02"/>
<rect x="124.25" y="209.96" width="1.2" height="1.2" fill="#c4c4c4"/><rect x="124.25" y="213.70" width="1.2" height="1.2" fill="#c4c4c4"/>
<text transform="translate(123.40,215.00) scale(0.75,1)" x="-0.81 6.73 13.26 19.79 25.33" y="0" font-family="Liberation Sans" font-size="10" fill="#c4c4c4" xml:space="preserve"> --- </text>
<path transform="translate(148.15,206.55) scale(0.930)" d="M5 0V1.2M0.8 3V1.5H9.2V3M0.3 5.5H9.7M4.5 2.5L2 8.3C5 8.8 7 9.3 8.5 9.8M7 5.5C6 8 4 9.2 1 9.8" fill="none" stroke="#c4c4c4" stroke-width="1.02"/>
<path transform="translate(157.95,206.55) scale(0.930)" d="M2.5 0.3L0.5 4M1.6 3V9.8M3.5 1.7H9.7M6.5 0.3V2.5M4.6 3H8.6V8.3H4.6ZM4.6 5H8.6M4.6 6.7H8.6M3.6 3V9.7H9.8" fill="none" stroke="#c4c4c4" stroke-width="1.02"/>
<rect x="168.35" y="209.96" width="1.2" height="1.2" fill="#c4c4c4"/><rect x="168.35" y="213.70" width="1.2" height="1.2" fill="#c4c4c4"/>
<text transform="translate(167.50,215.00) scale(0.75,1)" x="-0.81 6.73 13.26 19.79 25.33" y="0" font-family="Liberation Sans" font-size="10" fill="#c4c4c4" xml:space="preserve"> --- </text>
<path transform="translate(192.25,206.55) scale(0.930)" d="M2 0.5L0.5 3.5L3 4L0.5 7H4.3M3 4.5L3.5 5.5M2.2 7V9.8M1 8L0.5 9.3M3.5 8L4 9.3M6.5 0.3L5 3M6 1.5H9.5L5.5 6.5M6.5 2.5L9.8 6.3M6.5 6.8L8 7.8M6 8.5L8.5 9.8" fill="none" stroke="#c4c4c4" stroke-width="1.02"/>
<path transform="translate(202.05,206.55) scale(0.930)" d="M2.5 0.3L0.5 4M1.6 3V9.8M3.5 1.7H9.7M6.5 0.3V2.5M4.6 3H8.6V8.3H4.6ZM4.6 5H8.6M4.6 6.7H8.6M3.6 3V9.7H9.8" fill="none" stroke="#c4c4c4" stroke-width="1.02"/>
<rect x="212.45" y="209.96" width="1.2" height="1.2" fill="#c4c4c4"/><rect x="212.45" y="213.70" width="1.2" height="1.2" fill="#c4c4c4"/>
<text transform="translate(211.60,215.00) scale(0.75,1)" x="-0.81 6.73 13.26 19.79" y="0" font-family="Liberation Sans" font-size="10" fill="#c4c4c4" xml:space="preserve"> ---</text>
<rect x="5" y="386" width="1013" height="159" fill="#1b1b1b"/>
<rect x="6" y="386" width="964" height="146" fill="#000"/>
<g shape-rendering="crispEdges" stroke-width="1">
<line x1="6" y1="415.5" x2="970" y2="415.5" stroke="#525252"/>
<line x1="6" y1="415.5" x2="970" y2="415.5" stroke="#707070" stroke-dasharray="1 2"/>
<line x1="6" y1="464.5" x2="970" y2="464.5" stroke="#525252"/>
<line x1="6" y1="464.5" x2="970" y2="464.5" stroke="#707070" stroke-dasharray="1 2"/>
<line x1="6" y1="512.5" x2="970" y2="512.5" stroke="#525252"/>
<line x1="6" y1="512.5" x2="970" y2="512.5" stroke="#707070" stroke-dasharray="1 2"/>
<line x1="43.5" y1="386" x2="43.5" y2="532" stroke="#525252"/>
<line x1="43.5" y1="386" x2="43.5" y2="532" stroke="#6c6c6c" stroke-dasharray="1 2"/>
<line x1="93.5" y1="386" x2="93.5" y2="532" stroke="#525252"/>
<line x1="93.5" y1="386" x2="93.5" y2="532" stroke="#6c6c6c" stroke-dasharray="1 2"/>
<line x1="141.5" y1="386" x2="141.5" y2="532" stroke="#525252"/>
<line x1="141.5" y1="386" x2="141.5" y2="532" stroke="#6c6c6c" stroke-dasharray="1 2"/>
<line x1="189.5" y1="386" x2="189.5" y2="532" stroke="#525252"/>
<line x1="189.5" y1="386" x2="189.5" y2="532" stroke="#6c6c6c" stroke-dasharray="1 2"/>
<line x1="235.5" y1="386" x2="235.5" y2="532" stroke="#525252"/>
<line x1="235.5" y1="386" x2="235.5" y2="532" stroke="#6c6c6c" stroke-dasharray="1 2"/>
<line x1="279.5" y1="386" x2="279.5" y2="532" stroke="#525252"/>
<line x1="279.5" y1="386" x2="279.5" y2="532" stroke="#6c6c6c" stroke-dasharray="1 2"/>
<line x1="324.5" y1="386" x2="324.5" y2="532" stroke="#525252"/>
<line x1="324.5" y1="386" x2="324.5" y2="532" stroke="#6c6c6c" stroke-dasharray="1 2"/>
<line x1="372.5" y1="386" x2="372.5" y2="532" stroke="#525252"/>
<line x1="372.5" y1="386" x2="372.5" y2="532" stroke="#6c6c6c" stroke-dasharray="1 2"/>
<line x1="405.5" y1="386" x2="405.5" y2="532" stroke="#525252"/>
<line x1="405.5" y1="386" x2="405.5" y2="532" stroke="#6c6c6c" stroke-dasharray="1 2"/>
<line x1="453.5" y1="386" x2="453.5" y2="532" stroke="#525252"/>
<line x1="453.5" y1="386" x2="453.5" y2="532" stroke="#6c6c6c" stroke-dasharray="1 2"/>
<line x1="500.5" y1="386" x2="500.5" y2="532" stroke="#525252"/>
<line x1="500.5" y1="386" x2="500.5" y2="532" stroke="#6c6c6c" stroke-dasharray="1 2"/>
<line x1="547.5" y1="386" x2="547.5" y2="532" stroke="#525252"/>
<line x1="547.5" y1="386" x2="547.5" y2="532" stroke="#6c6c6c" stroke-dasharray="1 2"/>
<line x1="591.5" y1="386" x2="591.5" y2="532" stroke="#525252"/>
<line x1="591.5" y1="386" x2="591.5" y2="532" stroke="#6c6c6c" stroke-dasharray="1 2"/>
<line x1="639.5" y1="386" x2="639.5" y2="532" stroke="#525252"/>
<line x1="639.5" y1="386" x2="639.5" y2="532" stroke="#6c6c6c" stroke-dasharray="1 2"/>
<line x1="687.5" y1="386" x2="687.5" y2="532" stroke="#525252"/>
<line x1="687.5" y1="386" x2="687.5" y2="532" stroke="#6c6c6c" stroke-dasharray="1 2"/>
<line x1="783.5" y1="386" x2="783.5" y2="532" stroke="#525252"/>
<line x1="783.5" y1="386" x2="783.5" y2="532" stroke="#6c6c6c" stroke-dasharray="1 2"/>
<line x1="828.5" y1="386" x2="828.5" y2="532" stroke="#525252"/>
<line x1="828.5" y1="386" x2="828.5" y2="532" stroke="#6c6c6c" stroke-dasharray="1 2"/>
<line x1="866.5" y1="386" x2="866.5" y2="532" stroke="#525252"/>
<line x1="866.5" y1="386" x2="866.5" y2="532" stroke="#6c6c6c" stroke-dasharray="1 2"/>
<line x1="903.5" y1="386" x2="903.5" y2="532" stroke="#525252"/>
<line x1="903.5" y1="386" x2="903.5" y2="532" stroke="#6c6c6c" stroke-dasharray="1 2"/>
<line x1="936.5" y1="386" x2="936.5" y2="532" stroke="#525252"/>
<line x1="936.5" y1="386" x2="936.5" y2="532" stroke="#6c6c6c" stroke-dasharray="1 2"/>
<rect x="80" y="386" width="2" height="146" fill="#4e4e4e"/>
<line x1="81" y1="386" x2="81" y2="532" stroke="#686868" stroke-width="2" stroke-dasharray="1 2"/>
<rect x="735" y="386" width="2" height="146" fill="#4e4e4e"/>
<line x1="736" y1="386" x2="736" y2="532" stroke="#686868" stroke-width="2" stroke-dasharray="1 2"/>
</g>
<rect x="5" y="386" width="1" height="146" fill="#a4a4a4"/>
<rect x="5" y="533" width="966" height="1" fill="#5a5a5a"/>
<rect x="5" y="532" width="966" height="1" fill="#b8b8b8"/><rect x="970" y="386" width="1" height="147" fill="#b8b8b8"/>
<text transform="translate(43.50,540.70) scale(0.7,1)" x="0.58 7.86" y="0" font-family="Liberation Sans" font-size="10.5" fill="#b8b8b8" xml:space="preserve">05</text>
<text transform="translate(69.00,540.70) scale(0.7,1)" x="0.58 7.86" y="0" font-family="Liberation Sans" font-size="10.5" fill="#b8b8b8" xml:space="preserve">06</text>
<text transform="translate(94.00,540.70) scale(0.7,1)" x="0.58 7.86" y="0" font-family="Liberation Sans" font-size="10.5" fill="#b8b8b8" xml:space="preserve">09</text>
<text transform="translate(143.00,540.70) scale(0.7,1)" x="0.79 7.86" y="0" font-family="Liberation Sans" font-size="10.5" fill="#b8b8b8" xml:space="preserve">10</text>
<text transform="translate(191.00,540.70) scale(0.7,1)" x="0.79 8.08" y="0" font-family="Liberation Sans" font-size="10.5" fill="#b8b8b8" xml:space="preserve">11</text>
<text transform="translate(237.00,540.70) scale(0.7,1)" x="0.79 7.86" y="0" font-family="Liberation Sans" font-size="10.5" fill="#b8b8b8" xml:space="preserve">12</text>
<text transform="translate(281.00,540.70) scale(0.7,1)" x="0.79 7.86" y="0" font-family="Liberation Sans" font-size="10.5" fill="#b8b8b8" xml:space="preserve">13</text>
<text transform="translate(326.00,540.70) scale(0.7,1)" x="0.79 7.86" y="0" font-family="Liberation Sans" font-size="10.5" fill="#b8b8b8" xml:space="preserve">14</text>
<text transform="translate(374.00,540.70) scale(0.7,1)" x="0.79 7.86" y="0" font-family="Liberation Sans" font-size="10.5" fill="#b8b8b8" xml:space="preserve">15</text>
<text transform="translate(407.00,540.70) scale(0.7,1)" x="0.79 7.86" y="0" font-family="Liberation Sans" font-size="10.5" fill="#b8b8b8" xml:space="preserve">17</text>
<text transform="translate(455.00,540.70) scale(0.7,1)" x="0.79 7.86" y="0" font-family="Liberation Sans" font-size="10.5" fill="#b8b8b8" xml:space="preserve">18</text>
<text transform="translate(502.00,540.70) scale(0.7,1)" x="0.79 7.86" y="0" font-family="Liberation Sans" font-size="10.5" fill="#b8b8b8" xml:space="preserve">19</text>
<text transform="translate(548.50,540.70) scale(0.7,1)" x="0.58 7.86" y="0" font-family="Liberation Sans" font-size="10.5" fill="#b8b8b8" xml:space="preserve">20</text>
<text transform="translate(593.00,540.70) scale(0.7,1)" x="0.58 8.08" y="0" font-family="Liberation Sans" font-size="10.5" fill="#b8b8b8" xml:space="preserve">21</text>
<text transform="translate(641.00,540.70) scale(0.7,1)" x="0.58 7.86" y="0" font-family="Liberation Sans" font-size="10.5" fill="#b8b8b8" xml:space="preserve">22</text>
<text transform="translate(689.00,540.70) scale(0.7,1)" x="0.58 7.86" y="0" font-family="Liberation Sans" font-size="10.5" fill="#b8b8b8" xml:space="preserve">23</text>
<text transform="translate(737.00,540.70) scale(0.7,1)" x="0.58 7.86" y="0" font-family="Liberation Sans" font-size="10.5" fill="#b8b8b8" xml:space="preserve">00</text>
<text transform="translate(784.50,540.70) scale(0.7,1)" x="0.58 8.08" y="0" font-family="Liberation Sans" font-size="10.5" fill="#b8b8b8" xml:space="preserve">01</text>
<text transform="translate(829.50,540.70) scale(0.7,1)" x="0.58 7.86" y="0" font-family="Liberation Sans" font-size="10.5" fill="#b8b8b8" xml:space="preserve">02</text>
<text transform="translate(867.50,540.70) scale(0.7,1)" x="0.58 7.86" y="0" font-family="Liberation Sans" font-size="10.5" fill="#b8b8b8" xml:space="preserve">03</text>
<text transform="translate(905.00,540.70) scale(0.7,1)" x="0.58 7.86" y="0" font-family="Liberation Sans" font-size="10.5" fill="#b8b8b8" xml:space="preserve">04</text>
<text transform="translate(937.50,540.70) scale(0.7,1)" x="0.58 7.86" y="0" font-family="Liberation Sans" font-size="10.5" fill="#b8b8b8" xml:space="preserve">05</text>
<text transform="translate(957.50,540.70) scale(0.7,1)" x="0.58 7.86" y="0" font-family="Liberation Sans" font-size="10.5" fill="#b8b8b8" xml:space="preserve">06</text>
<text transform="translate(69.40,540.70) scale(0.7,1)" x="0.58 7.86" y="0" font-family="Liberation Sans" font-size="10.5" fill="#dcdcdc" font-weight="bold" xml:space="preserve">06</text>
<text transform="translate(958.00,540.70) scale(0.7,1)" x="0.58 7.86" y="0" font-family="Liberation Sans" font-size="10.5" fill="#b8b8b8" xml:space="preserve">06</text>
<text transform="translate(82.50,529.00) scale(0.75,1)" x="0.53 7.20" y="0" font-family="Liberation Sans" font-size="11" fill="#b8b8b8" xml:space="preserve">24</text>
<text transform="translate(736.50,529.00) scale(0.75,1)" x="0.53 7.20" y="0" font-family="Liberation Sans" font-size="11" fill="#b8b8b8" xml:space="preserve">25</text>
<svg x="971" y="386" width="47" height="159" overflow="hidden">
<text transform="translate(0.70,77.00) scale(0.75,1)" x="0.73 7.20 15.67 20.53 27.20 33.87" y="0" font-family="Liberation Sans" font-size="10.3" fill="#b8b8b8" xml:space="preserve">10,050</text>
<text transform="translate(0.70,125.00) scale(0.75,1)" x="0.73 7.20 15.67 20.53 27.20 33.87" y="0" font-family="Liberation Sans" font-size="10.3" fill="#b8b8b8" xml:space="preserve">10,000</text>
</svg>
<rect x="971" y="404" width="47" height="18" fill="#d6d6d6"/>
<text transform="translate(979.20,415.90) scale(0.8,1)" x="0.69 6.75 14.69 19.44 25.50 31.75" y="0" font-family="Liberation Sans" font-size="11" fill="#000" font-weight="bold" xml:space="preserve">10,103</text>
<text transform="translate(5.80,396.00) scale(0.75,1)" x="0.33" y="0" font-family="Liberation Sans" font-size="10" fill="#c4c4c4" xml:space="preserve">[</text>
<path transform="translate(10.95,387.55) scale(0.930)" d="M5 0.5L0.5 4M5 0.5L9.5 4M2.5 4.5H7.5M1.5 6.5H8.5M5 4.5V9.5M3 7.3L3.6 8.5M7 7.3L6.4 8.5M0.5 9.5H9.5" fill="none" stroke="#c4c4c4" stroke-width="1.02"/>
<text transform="translate(20.50,396.00) scale(0.75,1)" x="-0.81 5.73 12.26 19.79 25.33 31.86 38.39 45.13 51.46 59.79 64.53 71.06 77.59" y="0" font-family="Liberation Sans" font-size="10" fill="#c4c4c4" xml:space="preserve"> 26/02 14,683</text>
<path transform="translate(84.45,387.55) scale(0.930)" d="M1.8 2.3L8.2 8.7M8.2 2.3L1.8 8.7" fill="none" stroke="#c4c4c4" stroke-width="1.02"/>
<text transform="translate(94.00,396.00) scale(0.75,1)" x="-0.61 7.53 12.26 18.79 26.73 32.86 39.53" y="0" font-family="Liberation Sans" font-size="10" fill="#c4c4c4" xml:space="preserve">1.00]-[</text>
<path transform="translate(128.55,387.55) scale(0.930)" d="M5 0L4 1.5M1.5 1.5H8.5V9.5H1.5ZM1.5 5.5H8.5" fill="none" stroke="#c4c4c4" stroke-width="1.02"/>
<path transform="translate(138.35,387.55) scale(0.930)" d="M5 0.5L0.5 4M5 0.5L9.5 4M2.5 4.5H7.5M1.5 6.5H8.5M5 4.5V9.5M3 7.3L3.6 8.5M7 7.3L6.4 8.5M0.5 9.5H9.5" fill="none" stroke="#c4c4c4" stroke-width="1.02"/>
<text transform="translate(147.90,396.00) scale(0.75,1)" x="-0.81 5.73 12.26 19.79 25.33 31.86 38.39 44.93 53.26 57.99 64.53 71.06" y="0" font-family="Liberation Sans" font-size="10" fill="#c4c4c4" xml:space="preserve"> 26/02 4,580</text>
<path transform="translate(206.95,387.55) scale(0.930)" d="M1.8 2.3L8.2 8.7M8.2 2.3L1.8 8.7" fill="none" stroke="#c4c4c4" stroke-width="1.02"/>
<text transform="translate(216.50,396.00) scale(0.75,1)" x="-0.61 7.53 12.26 18.79 26.73 31.86" y="0" font-family="Liberation Sans" font-size="10" fill="#c4c4c4" xml:space="preserve">1.00] </text>
<path transform="translate(246.15,387.55) scale(0.930)" d="M2 0.5L0.5 3.5L3 4L0.5 7H4.3M3 4.5L3.5 5.5M2.2 7V9.8M1 8L0.5 9.3M3.5 8L4 9.3M6.5 0.3L5 3M6 1.5H9.5L5.5 6.5M6.5 2.5L9.8 6.3M6.5 6.8L8 7.8M6 8.5L8.5 9.8" fill="none" stroke="#c4c4c4" stroke-width="1.02"/>
<path transform="translate(255.95,387.55) scale(0.930)" d="M2.5 0.3L0.5 4M1.6 3V9.8M3.5 1.7H9.7M6.5 0.3V2.5M4.6 3H8.6V8.3H4.6ZM4.6 5H8.6M4.6 6.7H8.6M3.6 3V9.7H9.8" fill="none" stroke="#c4c4c4" stroke-width="1.02"/>
<text transform="translate(265.50,396.00) scale(0.75,1)" x="-0.81" y="0" font-family="Liberation Sans" font-size="10" fill="#c4c4c4" xml:space="preserve"> </text>
<path transform="translate(270.65,387.55) scale(0.930)" d="M0.7 2H3.5V8.5H0.7ZM0.7 5H3.5M5 1.8H9M7 0.3V4M4.5 4H9.7M4.5 6H9.7M8.3 4.5V9.5L7.5 9.2M6 7L6.6 8" fill="none" stroke="#c4c4c4" stroke-width="1.02"/>
<path transform="translate(280.45,387.55) scale(0.930)" d="M3 0V1.5M0.5 1.8H6M3 2L1 4.5H5M4 3.5L0.5 8M2.5 6.5L5.5 9.5M4.5 5.5L1.5 9.5M7 1.5V7.5M9 0.3V9.5L8.2 9" fill="none" stroke="#c4c4c4" stroke-width="1.02"/>
<rect x="290.85" y="390.96" width="1.2" height="1.2" fill="#c4c4c4"/><rect x="290.85" y="394.70" width="1.2" height="1.2" fill="#c4c4c4"/>
<rect x="305.55" y="390.96" width="1.2" height="1.2" fill="#c4c4c4"/><rect x="305.55" y="394.70" width="1.2" height="1.2" fill="#c4c4c4"/>
<text transform="translate(290.00,396.00) scale(0.75,1)" x="-0.81 5.73 12.26 18.79 25.33 31.86 38.39 45.13 51.46 59.79 64.73 71.06 77.59" y="0" font-family="Liberation Sans" font-size="10" fill="#c4c4c4" xml:space="preserve"> 06 00 10,103</text>
<polyline clip-path="url(#c3)" points="5.0,520.1 6.2,518.6 7.5,520.5 9.0,520.4 10.5,524.1 12.0,517.4 13.5,509.4 15.0,508.1 16.5,503.3 18.0,505.2 19.5,504.3 21.0,504.4 22.2,506.3 23.4,509.3 24.6,506.9 25.8,506.7 27.0,509.0 28.2,511.6 29.4,510.8 30.6,509.8 31.8,512.6 33.0,509.0 34.2,511.2 35.4,508.7 36.6,506.6 37.8,505.4 39.0,505.6 40.5,508.0 42.0,505.2 43.5,506.0 45.0,504.7 46.5,501.6 48.0,500.1 49.2,498.0 50.5,497.4 51.8,498.1 53.0,501.0 54.2,500.9 55.5,500.4 57.0,500.1 58.5,498.3 60.0,495.9 61.5,494.4 63.0,490.9 64.5,486.2 66.0,484.6 67.5,482.2 69.0,486.0 70.5,487.9 72.0,487.6 73.5,490.8 75.0,487.8 76.5,488.7 78.0,490.5 79.5,488.1 81.0,488.9 82.5,464.4 83.7,464.9 84.9,464.2 86.1,461.6 87.3,460.9 88.5,456.3 90.0,460.0 91.5,462.3 93.0,464.7 94.5,468.5 96.0,474.8 97.2,475.3 98.4,472.7 99.6,472.4 100.8,468.7 102.0,470.4 103.2,472.9 104.5,476.9 105.8,478.7 107.0,477.8 108.2,479.3 109.5,482.6 111.0,475.2 112.5,472.0 114.0,466.4 115.2,466.4 116.4,466.5 117.6,470.6 118.8,469.1 120.0,469.5 121.3,470.0 122.6,472.6 123.9,469.2 125.1,469.8 126.4,470.4 127.7,472.2 129.0,472.4 130.2,473.9 131.4,472.2 132.6,473.1 133.8,473.9 135.0,477.7 136.2,480.2 137.4,477.6 138.6,477.6 139.8,478.7 141.0,479.9 142.2,479.1 143.4,478.0 144.6,474.5 145.8,470.6 147.0,470.0 148.2,469.3 149.5,469.4 150.8,470.8 152.0,469.3 153.2,467.2 154.5,466.4 155.8,467.4 157.1,464.9 158.4,468.8 159.6,470.0 160.9,471.3 162.2,471.8 163.5,470.3 164.7,466.0 165.9,460.6 167.1,459.1 168.3,453.3 169.5,448.9 171.0,447.4 172.5,445.3 174.0,444.2 175.2,445.2 176.4,446.6 177.6,449.2 178.8,451.2 180.0,454.7 181.5,449.6 183.0,449.9 184.2,452.0 185.4,451.7 186.6,453.5 187.8,456.0 189.0,458.3 190.2,455.6 191.4,457.5 192.6,457.9 193.8,454.3 195.0,452.2 196.3,450.1 197.7,449.5 199.0,450.7 200.3,450.8 201.7,453.9 203.0,451.6 204.3,450.2 205.7,454.6 207.0,454.1 208.2,452.8 209.4,455.0 210.6,453.6 211.8,456.3 213.0,460.2 214.2,461.9 215.5,462.5 216.8,461.2 218.0,462.1 219.2,462.2 220.5,466.2 222.0,470.9 223.5,477.1 225.0,480.2 226.5,476.4 228.0,476.6 229.5,475.9 231.0,477.3 232.5,478.6 234.0,480.1 235.2,478.9 236.4,475.3 237.6,475.0 238.8,473.6 240.0,470.9 241.4,470.9 242.8,472.6 244.1,473.6 245.5,476.6 246.9,477.4 248.2,474.2 249.6,474.7 250.9,474.3 252.3,473.1 253.6,468.7 255.0,465.5 256.3,466.7 257.7,468.2 259.0,469.9 260.4,474.4 261.8,479.0 263.1,481.9 264.5,482.6 265.9,480.1 267.2,478.3 268.6,472.1 270.0,475.3 271.3,478.5 272.6,479.9 274.0,481.1 275.4,479.0 276.8,476.2 278.1,478.0 279.5,475.8 280.9,477.0 282.3,477.9 283.6,475.7 285.0,475.1 286.4,477.9 287.7,477.8 289.0,475.0 290.4,474.0 291.8,472.9 293.2,475.8 294.5,475.8 295.9,471.9 297.3,473.5 298.6,476.5 300.0,476.8 301.4,476.2 302.7,477.9 304.1,476.3 305.5,475.4 306.9,480.4 308.2,480.7 309.6,480.5 311.0,482.9 312.3,480.6 313.6,481.8 315.0,481.8 316.3,478.3 317.7,475.1 319.1,472.6 320.4,470.0 321.8,469.3 323.2,469.5 324.5,471.3 325.9,471.4 327.3,471.7 328.6,466.8 330.0,463.4 331.3,460.8 332.7,459.4 334.1,457.0 335.4,458.4 336.8,456.3 338.1,455.4 339.5,454.6 340.8,451.4 342.2,452.0 343.6,451.4 344.9,450.4 346.3,454.4 347.6,452.7 349.0,453.8 350.4,457.5 351.8,459.2 353.1,460.0 354.5,462.6 355.9,464.6 357.2,467.7 358.6,466.3 360.0,469.3 361.4,467.8 362.7,467.2 364.1,469.3 365.4,468.5 366.8,468.3 368.2,469.0 369.5,469.8 370.9,467.4 372.2,467.4 373.6,466.6 374.9,466.3 376.3,466.9 377.6,465.8 379.0,465.6 380.4,469.9 381.7,476.7 383.1,480.8 384.5,478.4 385.8,475.9 387.2,469.4 388.6,473.4 389.9,479.2 391.3,483.0 392.7,477.5 394.0,474.3 395.4,473.6 396.7,470.2 398.1,468.6 399.5,468.2 400.9,471.4 402.2,473.3 403.6,474.8 405.0,463.8 406.3,458.0 407.7,459.0 409.1,457.1 410.4,460.8 411.8,462.9 413.1,460.0 414.5,463.1 415.9,461.6 417.2,461.8 418.5,464.8 419.9,465.3 421.3,462.5 422.6,463.4 424.0,464.6 425.4,464.5 426.7,464.2 428.1,465.2 429.5,469.7 430.8,469.0 432.2,473.1 433.6,471.9 434.9,468.6 436.3,468.3 437.6,468.9 439.0,467.8 440.3,464.3 441.7,467.1 443.1,466.0 444.4,465.5 445.8,459.8 447.2,457.6 448.6,454.7 449.9,456.5 451.3,453.5 452.7,450.6 454.0,450.1 455.4,451.5 456.8,450.4 458.1,446.1 459.5,443.0 460.9,446.7 462.2,446.4 463.6,447.1 464.9,444.4 466.3,443.4 467.6,448.0 469.0,449.4 470.4,449.1 471.7,454.7 473.1,452.7 474.4,451.7 475.8,446.6 477.2,447.6 478.6,446.2 479.9,450.8 481.3,451.4 482.6,452.1 484.0,454.5 485.4,460.8 486.7,462.3 488.1,464.7 489.5,465.3 490.9,463.4 492.3,461.4 493.6,462.7 495.0,463.5 496.4,465.4 497.7,467.6 499.1,464.7 500.4,464.1 501.8,459.4 503.2,456.9 504.6,456.8 505.9,458.5 507.3,458.3 508.6,456.7 510.0,453.4 511.4,454.5 512.7,452.5 514.0,448.4 515.4,447.0 516.8,447.7 518.1,442.3 519.5,442.7 520.9,439.6 522.2,437.4 523.6,437.1 525.0,437.1 526.3,438.7 527.7,441.2 529.1,444.7 530.4,443.6 531.8,446.8 533.2,444.3 534.5,441.5 535.9,437.8 537.3,434.6 538.6,432.8 540.0,432.6 541.3,432.2 542.7,435.5 544.0,434.2 545.4,433.2 546.8,433.9 548.1,438.9 549.5,441.7 550.9,442.6 552.3,440.9 553.6,440.4 555.0,440.8 556.3,442.2 557.7,441.4 559.1,443.0 560.4,442.9 561.8,446.8 563.2,447.4 564.5,445.0 565.9,442.1 567.3,444.4 568.6,441.3 570.0,440.1 571.3,438.9 572.7,441.1 574.0,442.9 575.4,442.0 576.7,439.2 578.1,439.0 579.5,436.4 580.8,436.6 582.2,435.6 583.5,436.6 584.9,434.9 586.3,434.0 587.6,434.9 589.0,434.6 590.4,437.4 591.7,438.7 593.1,440.9 594.5,441.7 595.8,443.0 597.2,444.8 598.6,440.8 599.9,437.8 601.3,439.0 602.7,433.9 604.0,433.9 605.4,432.3 606.8,429.5 608.1,432.8 609.5,434.4 610.9,433.7 612.2,434.2 613.6,434.9 615.0,435.4 616.3,439.9 617.6,443.9 619.0,449.4 620.4,446.1 621.8,442.7 623.1,437.7 624.5,435.2 625.9,436.4 627.2,438.2 628.6,437.6 629.9,437.7 631.3,439.4 632.7,440.6 634.0,439.6 635.4,443.1 636.7,442.9 638.1,443.2 639.5,441.9 640.8,440.8 642.2,438.5 643.6,434.3 644.9,436.1 646.3,435.5 647.7,432.4 649.0,430.1 650.4,428.5 651.7,423.4 653.1,423.8 654.5,424.5 655.9,425.4 657.2,428.2 658.6,433.1 660.0,432.9 661.3,436.6 662.7,440.1 664.0,439.9 665.4,440.2 666.7,441.8 668.1,444.5 669.5,441.7 670.8,437.5 672.2,433.9 673.6,431.6 675.0,431.6 676.3,432.6 677.7,435.9 679.0,429.6 680.4,425.5 681.7,417.9 682.8,408.2 683.9,400.0 685.0,393.3 686.3,399.1 687.5,404.3 688.8,407.3 690.0,412.7 691.3,417.5 692.7,415.6 694.0,412.0 695.4,413.6 696.8,409.5 698.1,411.0 699.4,410.1 700.8,403.9 702.2,406.7 703.5,410.9 704.9,414.5 706.3,414.4 707.6,414.7 709.0,415.9 710.4,423.4 711.8,424.9 713.1,430.0 714.5,432.2 715.8,435.3 717.2,439.8 718.5,438.4 719.9,437.7 721.2,433.9 722.6,432.5 724.0,429.1 725.4,433.3 726.8,442.7 728.2,434.2 729.5,424.1 730.9,415.7 732.3,420.1 733.6,422.9 735.0,424.6 736.4,429.1 737.7,435.2 739.1,440.8 740.5,444.9 741.8,442.8 743.2,441.4 744.5,438.8 745.9,431.4 747.3,430.4 748.6,428.0 750.0,426.5 751.4,421.3 752.7,418.4 754.1,418.3 755.4,421.4 756.8,420.4 758.1,422.2 759.5,425.4 760.9,421.8 762.2,417.6 763.6,414.6 765.0,415.6 766.3,411.4 767.7,411.5 769.1,409.9 770.5,410.1 771.8,412.1 773.2,411.8 774.5,410.3 775.9,411.4 777.2,414.9 778.6,417.6 780.0,413.7 781.4,412.0 782.7,409.6 784.1,404.9 785.5,406.8 786.8,405.1 788.2,409.1 789.5,410.2 790.9,413.2 792.2,414.8 793.6,414.8 794.9,414.9 796.3,420.7 797.6,419.8 799.0,422.5 800.4,421.5 801.8,420.4 803.1,421.8 804.5,423.1 805.9,421.5 807.2,423.9 808.6,423.7 810.0,425.9 811.4,427.7 812.7,428.7 814.0,430.6 815.4,433.0 816.8,433.0 818.1,428.6 819.5,423.2 820.9,427.7 822.2,430.8 823.6,430.0 824.9,429.2 826.3,430.1 827.6,431.0 829.0,433.6 830.4,431.3 831.7,430.3 833.1,429.2 834.5,432.0 835.8,435.2 837.2,436.3 838.5,435.6 839.9,436.1 841.3,437.4 842.6,437.8 844.0,438.4 845.4,432.7 846.8,429.2 848.2,434.4 849.5,432.7 850.9,435.0 852.2,437.3 853.6,440.3 855.0,436.4 856.3,434.6 857.6,433.2 859.0,432.8 860.4,433.8 861.7,437.1 863.1,438.0 864.5,438.7 865.8,434.8 867.2,433.8 868.6,439.0 869.9,443.2 871.3,443.8 872.7,446.0 874.1,445.1 875.4,448.3 876.8,453.5 878.2,453.0 879.5,452.3 880.9,451.9 882.2,447.3 883.6,444.2 885.0,443.1 886.3,444.2 887.7,445.0 889.1,446.2 890.4,445.0 891.8,443.8 893.1,442.4 894.5,439.1 895.8,437.2 897.2,435.7 898.5,439.8 899.9,439.2 901.3,443.3 902.7,444.0 904.0,443.3 905.4,442.9 906.8,441.3 908.1,441.6 909.4,440.9 910.8,436.5 912.2,436.4 913.5,439.4 914.9,441.4 916.2,441.7 917.6,441.6 919.0,444.2 920.3,442.7 921.7,444.4 923.1,444.3 924.4,446.1 925.8,444.3 927.2,444.2 928.6,441.3 929.9,438.2 931.3,436.5 932.7,439.2 934.0,438.2 935.4,435.3 936.7,432.2 938.1,433.1 939.5,432.7 940.8,430.1 942.2,427.1 943.5,427.0 944.9,427.0 946.3,422.2 947.6,418.3 949.0,417.3 950.4,418.7 951.8,421.0 953.1,419.8 954.5,422.9 955.9,422.1 957.2,419.7 958.6,416.4 959.9,418.3 961.3,414.7 962.6,415.2 964.0,411.4 965.3,409.1 966.7,410.2 967.8,409.6 968.9,413.4 970.0,412.3" fill="none" stroke="#ff0000" stroke-width="2" stroke-linejoin="miter"/>
<g clip-path="url(#c1)"><rect x="6.8" y="172.9" width="1.2" height="5.6" fill="#ff1a1a"/><rect x="8.4" y="165.2" width="1.2" height="9.1" fill="#ff1a1a"/><rect x="10.0" y="162.3" width="1.2" height="7.7" fill="#ff1a1a"/><rect x="11.6" y="164.5" width="2" height="1.6" fill="#e6d25a"/><rect x="13.2" y="157.2" width="1.2" height="9.5" fill="#ff1a1a"/><rect x="14.8" y="160.3" width="1.2" height="2.5" fill="#2a8cff"/><rect x="16.4" y="160.0" width="1.2" height="2.9" fill="#ff1a1a"/><rect x="18.0" y="160.9" width="2" height="1.6" fill="#e6d25a"/><rect x="19.6" y="159.7" width="1.2" height="2.6" fill="#ff1a1a"/><rect x="21.2" y="158.6" width="1.2" height="3.5" fill="#ff1a1a"/><rect x="22.8" y="160.1" width="2" height="1.6" fill="#e6d25a"/><rect x="24.4" y="158.3" width="1.2" height="7.2" fill="#ff1a1a"/><rect x="26.0" y="158.6" width="2" height="1.6" fill="#e6d25a"/><rect x="27.6" y="155.9" width="1.2" height="6.0" fill="#ff1a1a"/><rect x="29.2" y="152.7" width="1.2" height="6.1" fill="#2a8cff"/><rect x="30.8" y="156.4" width="1.2" height="2.9" fill="#ff1a1a"/><rect x="32.4" y="156.2" width="1.2" height="3.0" fill="#2a8cff"/><rect x="34.0" y="156.6" width="1.2" height="5.2" fill="#ff1a1a"/><rect x="35.6" y="155.6" width="1.2" height="2.3" fill="#ff1a1a"/><rect x="37.2" y="156.0" width="2" height="1.6" fill="#e6d25a"/><rect x="38.8" y="155.8" width="2" height="1.6" fill="#e6d25a"/><rect x="40.4" y="153.7" width="1.2" height="7.6" fill="#ff1a1a"/><rect x="42.0" y="149.3" width="1.2" height="6.4" fill="#ff1a1a"/><rect x="43.6" y="150.6" width="2" height="1.6" fill="#e6d25a"/><rect x="45.2" y="146.8" width="1.2" height="5.0" fill="#ff1a1a"/><rect x="46.8" y="150.1" width="2" height="1.6" fill="#e6d25a"/><rect x="48.4" y="149.0" width="1.2" height="3.2" fill="#ff1a1a"/><rect x="50.0" y="148.6" width="1.2" height="1.5" fill="#ff1a1a"/><rect x="51.6" y="145.3" width="1.2" height="5.4" fill="#2a8cff"/><rect x="53.2" y="148.8" width="1.2" height="3.2" fill="#2a8cff"/><rect x="54.8" y="148.4" width="1.2" height="3.4" fill="#ff1a1a"/><rect x="56.4" y="148.6" width="2" height="1.6" fill="#e6d25a"/><rect x="58.0" y="147.5" width="1.2" height="2.7" fill="#ff1a1a"/><rect x="59.6" y="145.1" width="1.2" height="4.4" fill="#ff1a1a"/><rect x="61.2" y="143.9" width="1.2" height="3.1" fill="#ff1a1a"/><rect x="62.8" y="140.1" width="2" height="1.6" fill="#e6d25a"/><rect x="64.4" y="135.8" width="1.2" height="6.1" fill="#ff1a1a"/><rect x="66.0" y="133.7" width="1.2" height="4.1" fill="#ff1a1a"/><rect x="67.6" y="134.1" width="2" height="1.6" fill="#e6d25a"/><rect x="69.2" y="135.7" width="2" height="1.6" fill="#e6d25a"/><rect x="70.8" y="135.7" width="2" height="1.6" fill="#e6d25a"/><rect x="72.4" y="135.6" width="1.2" height="2.1" fill="#2a8cff"/><rect x="74.0" y="136.0" width="1.2" height="5.0" fill="#2a8cff"/><rect x="75.6" y="138.7" width="1.2" height="5.8" fill="#2a8cff"/><rect x="77.2" y="141.1" width="1.2" height="2.8" fill="#ff1a1a"/><rect x="78.8" y="138.6" width="1.2" height="3.5" fill="#ff1a1a"/><rect x="82.0" y="97.1" width="1.2" height="5.9" fill="#ff1a1a"/><rect x="83.6" y="98.8" width="1.2" height="3.3" fill="#ff1a1a"/><rect x="85.2" y="96.9" width="1.2" height="4.1" fill="#ff1a1a"/><rect x="86.8" y="92.7" width="1.2" height="9.0" fill="#ff1a1a"/><rect x="88.4" y="92.9" width="1.2" height="5.0" fill="#2a8cff"/><rect x="90.0" y="92.5" width="1.2" height="6.3" fill="#2a8cff"/><rect x="91.6" y="96.8" width="1.2" height="5.3" fill="#2a8cff"/><rect x="93.2" y="98.5" width="1.2" height="2.6" fill="#ff1a1a"/><rect x="94.8" y="98.4" width="1.2" height="2.0" fill="#2a8cff"/><rect x="96.4" y="97.8" width="2" height="1.6" fill="#e6d25a"/><rect x="98.0" y="97.5" width="2" height="1.6" fill="#e6d25a"/><rect x="99.6" y="96.3" width="1.2" height="4.2" fill="#ff1a1a"/><rect x="101.2" y="97.2" width="1.2" height="8.3" fill="#2a8cff"/><rect x="102.8" y="99.6" width="1.2" height="7.8" fill="#2a8cff"/><rect x="104.4" y="105.9" width="1.2" height="8.2" fill="#2a8cff"/><rect x="106.0" y="116.7" width="2" height="1.6" fill="#e6d25a"/><rect x="107.6" y="116.8" width="1.2" height="6.1" fill="#2a8cff"/><rect x="109.2" y="118.4" width="1.2" height="5.2" fill="#2a8cff"/><rect x="110.8" y="120.4" width="1.2" height="3.0" fill="#ff1a1a"/><rect x="112.4" y="113.6" width="1.2" height="9.4" fill="#ff1a1a"/><rect x="114.0" y="109.4" width="1.2" height="6.7" fill="#ff1a1a"/><rect x="115.6" y="105.7" width="1.2" height="5.6" fill="#ff1a1a"/><rect x="117.2" y="105.6" width="1.2" height="4.7" fill="#2a8cff"/><rect x="118.8" y="108.9" width="2" height="1.6" fill="#e6d25a"/><rect x="120.4" y="106.4" width="1.2" height="6.5" fill="#ff1a1a"/><rect x="122.0" y="107.0" width="1.2" height="3.7" fill="#2a8cff"/><rect x="123.6" y="110.4" width="2" height="1.6" fill="#e6d25a"/><rect x="125.2" y="110.8" width="2" height="1.6" fill="#e6d25a"/><rect x="126.8" y="110.9" width="2" height="1.6" fill="#e6d25a"/><rect x="128.4" y="111.0" width="2" height="1.6" fill="#e6d25a"/><rect x="130.0" y="110.9" width="1.2" height="2.3" fill="#2a8cff"/><rect x="131.6" y="110.4" width="1.2" height="4.7" fill="#ff1a1a"/><rect x="133.2" y="110.7" width="2" height="1.6" fill="#e6d25a"/><rect x="134.8" y="110.7" width="1.2" height="8.9" fill="#2a8cff"/><rect x="136.4" y="116.0" width="1.2" height="6.7" fill="#2a8cff"/><rect x="138.0" y="117.8" width="1.2" height="3.7" fill="#2a8cff"/><rect x="139.6" y="114.5" width="1.2" height="6.8" fill="#ff1a1a"/><rect x="141.2" y="111.3" width="1.2" height="4.7" fill="#ff1a1a"/><rect x="142.8" y="108.6" width="1.2" height="7.0" fill="#ff1a1a"/><rect x="144.4" y="105.6" width="2" height="1.6" fill="#e6d25a"/><rect x="146.0" y="101.5" width="1.2" height="6.1" fill="#ff1a1a"/><rect x="147.6" y="102.7" width="1.2" height="2.2" fill="#ff1a1a"/><rect x="149.2" y="103.4" width="2" height="1.6" fill="#e6d25a"/><rect x="150.8" y="103.8" width="2" height="1.6" fill="#e6d25a"/><rect x="152.4" y="101.6" width="1.2" height="3.8" fill="#ff1a1a"/><rect x="154.0" y="101.2" width="1.2" height="2.1" fill="#2a8cff"/><rect x="155.6" y="101.4" width="2" height="1.6" fill="#e6d25a"/><rect x="157.2" y="101.1" width="1.2" height="3.4" fill="#2a8cff"/><rect x="158.8" y="102.7" width="2" height="1.6" fill="#e6d25a"/><rect x="160.4" y="101.5" width="1.2" height="3.2" fill="#ff1a1a"/><rect x="162.0" y="101.4" width="1.2" height="2.4" fill="#2a8cff"/><rect x="163.6" y="96.9" width="1.2" height="7.1" fill="#ff1a1a"/><rect x="165.2" y="91.3" width="1.2" height="7.2" fill="#ff1a1a"/><rect x="166.8" y="87.5" width="1.2" height="5.8" fill="#ff1a1a"/><rect x="168.4" y="83.5" width="1.2" height="5.7" fill="#ff1a1a"/><rect x="170.0" y="79.8" width="1.2" height="5.1" fill="#ff1a1a"/><rect x="171.6" y="78.0" width="2" height="1.6" fill="#e6d25a"/><rect x="173.2" y="76.4" width="1.2" height="3.1" fill="#ff1a1a"/><rect x="174.8" y="72.5" width="1.2" height="6.9" fill="#2a8cff"/><rect x="176.4" y="77.6" width="1.2" height="4.4" fill="#2a8cff"/><rect x="178.0" y="80.2" width="1.2" height="4.3" fill="#2a8cff"/><rect x="179.6" y="80.0" width="1.2" height="6.3" fill="#2a8cff"/><rect x="181.2" y="84.6" width="2" height="1.6" fill="#e6d25a"/><rect x="182.8" y="84.1" width="1.2" height="9.6" fill="#2a8cff"/><rect x="184.4" y="91.7" width="2" height="1.6" fill="#e6d25a"/><rect x="186.0" y="94.0" width="2" height="1.6" fill="#e6d25a"/><rect x="187.6" y="98.8" width="2" height="1.6" fill="#e6d25a"/><rect x="189.2" y="99.0" width="1.2" height="6.3" fill="#2a8cff"/><rect x="190.8" y="97.6" width="1.2" height="7.3" fill="#ff1a1a"/><rect x="192.4" y="94.5" width="1.2" height="7.4" fill="#ff1a1a"/><rect x="194.0" y="94.7" width="2" height="1.6" fill="#e6d25a"/><rect x="195.6" y="94.6" width="1.2" height="5.7" fill="#2a8cff"/><rect x="197.2" y="92.9" width="1.2" height="3.8" fill="#ff1a1a"/><rect x="198.8" y="93.8" width="1.2" height="2.6" fill="#2a8cff"/><rect x="200.4" y="94.6" width="2" height="1.6" fill="#e6d25a"/><rect x="202.0" y="94.6" width="1.2" height="3.6" fill="#2a8cff"/><rect x="203.6" y="95.9" width="1.2" height="2.1" fill="#ff1a1a"/><rect x="205.2" y="96.1" width="1.2" height="6.9" fill="#2a8cff"/><rect x="206.8" y="99.4" width="2" height="1.6" fill="#e6d25a"/><rect x="208.4" y="97.8" width="1.2" height="3.6" fill="#ff1a1a"/><rect x="210.0" y="97.7" width="1.2" height="3.2" fill="#2a8cff"/><rect x="211.6" y="94.9" width="1.2" height="5.6" fill="#ff1a1a"/><rect x="213.2" y="98.2" width="1.2" height="4.9" fill="#2a8cff"/><rect x="214.8" y="101.2" width="1.2" height="2.1" fill="#2a8cff"/><rect x="216.4" y="106.3" width="2" height="1.6" fill="#e6d25a"/><rect x="218.0" y="106.6" width="1.2" height="3.6" fill="#2a8cff"/><rect x="219.6" y="108.6" width="1.2" height="6.4" fill="#2a8cff"/><rect x="221.2" y="119.1" width="2" height="1.6" fill="#e6d25a"/><rect x="222.8" y="127.9" width="2" height="1.6" fill="#e6d25a"/><rect x="224.4" y="125.7" width="2" height="1.6" fill="#e6d25a"/><rect x="226.0" y="120.4" width="1.2" height="10.6" fill="#ff1a1a"/><rect x="227.6" y="115.6" width="2" height="1.6" fill="#e6d25a"/><rect x="229.2" y="115.4" width="2" height="1.6" fill="#e6d25a"/><rect x="230.8" y="115.0" width="1.2" height="2.7" fill="#2a8cff"/><rect x="232.4" y="115.8" width="1.2" height="4.1" fill="#2a8cff"/><rect x="234.0" y="117.2" width="1.2" height="3.5" fill="#2a8cff"/><rect x="235.6" y="119.0" width="2" height="1.6" fill="#e6d25a"/><rect x="237.2" y="116.3" width="1.2" height="4.6" fill="#ff1a1a"/><rect x="238.8" y="115.9" width="2" height="1.6" fill="#e6d25a"/><rect x="240.4" y="113.8" width="1.2" height="4.1" fill="#ff1a1a"/><rect x="242.0" y="111.0" width="1.2" height="5.1" fill="#ff1a1a"/><rect x="243.6" y="108.9" width="2" height="1.6" fill="#e6d25a"/><rect x="245.2" y="109.4" width="2" height="1.6" fill="#e6d25a"/><rect x="246.8" y="106.0" width="1.2" height="8.3" fill="#ff1a1a"/><rect x="248.4" y="104.0" width="1.2" height="4.2" fill="#ff1a1a"/><rect x="250.0" y="104.2" width="2" height="1.6" fill="#e6d25a"/><rect x="251.6" y="102.6" width="1.2" height="5.1" fill="#ff1a1a"/><rect x="253.2" y="102.9" width="1.2" height="3.3" fill="#2a8cff"/><rect x="254.8" y="103.3" width="1.2" height="6.1" fill="#2a8cff"/><rect x="256.4" y="103.2" width="1.2" height="9.2" fill="#2a8cff"/><rect x="258.0" y="112.4" width="2" height="1.6" fill="#e6d25a"/><rect x="259.6" y="118.6" width="2" height="1.6" fill="#e6d25a"/><rect x="261.2" y="118.1" width="1.2" height="5.2" fill="#2a8cff"/><rect x="262.8" y="125.5" width="2" height="1.6" fill="#e6d25a"/><rect x="264.4" y="123.4" width="1.2" height="4.1" fill="#ff1a1a"/><rect x="266.0" y="119.6" width="1.2" height="5.4" fill="#ff1a1a"/><rect x="267.6" y="117.6" width="1.2" height="3.9" fill="#2a8cff"/><rect x="269.2" y="120.3" width="2" height="1.6" fill="#e6d25a"/><rect x="270.8" y="119.5" width="1.2" height="6.6" fill="#ff1a1a"/><rect x="272.4" y="122.0" width="2" height="1.6" fill="#e6d25a"/><rect x="274.0" y="121.6" width="1.2" height="2.9" fill="#2a8cff"/><rect x="275.6" y="120.4" width="1.2" height="6.0" fill="#ff1a1a"/><rect x="277.2" y="120.5" width="2" height="1.6" fill="#e6d25a"/><rect x="278.8" y="119.2" width="1.2" height="2.5" fill="#ff1a1a"/><rect x="280.4" y="119.7" width="2" height="1.6" fill="#e6d25a"/><rect x="282.0" y="119.8" width="2" height="1.6" fill="#e6d25a"/><rect x="283.6" y="117.5" width="1.2" height="4.3" fill="#ff1a1a"/><rect x="285.2" y="117.2" width="1.2" height="4.5" fill="#ff1a1a"/><rect x="286.8" y="114.8" width="1.2" height="6.2" fill="#ff1a1a"/><rect x="288.4" y="113.0" width="1.2" height="3.5" fill="#ff1a1a"/><rect x="290.0" y="112.2" width="2" height="1.6" fill="#e6d25a"/><rect x="291.6" y="112.6" width="1.2" height="3.2" fill="#2a8cff"/><rect x="293.2" y="110.5" width="1.2" height="5.4" fill="#2a8cff"/><rect x="294.8" y="112.1" width="1.2" height="3.7" fill="#ff1a1a"/><rect x="296.4" y="111.9" width="1.2" height="5.7" fill="#2a8cff"/><rect x="298.0" y="116.2" width="2" height="1.6" fill="#e6d25a"/><rect x="299.6" y="113.9" width="1.2" height="5.6" fill="#2a8cff"/><rect x="301.2" y="120.3" width="2" height="1.6" fill="#e6d25a"/><rect x="302.8" y="120.7" width="2" height="1.6" fill="#e6d25a"/><rect x="304.4" y="119.6" width="2" height="1.6" fill="#e6d25a"/><rect x="306.0" y="119.5" width="1.2" height="7.8" fill="#2a8cff"/><rect x="307.6" y="121.7" width="2" height="1.6" fill="#e6d25a"/><rect x="309.2" y="121.9" width="1.2" height="3.6" fill="#2a8cff"/><rect x="310.8" y="123.5" width="1.2" height="7.7" fill="#2a8cff"/><rect x="312.4" y="125.1" width="1.2" height="2.5" fill="#2a8cff"/><rect x="314.0" y="122.9" width="1.2" height="4.4" fill="#ff1a1a"/><rect x="315.6" y="121.3" width="1.2" height="3.3" fill="#ff1a1a"/><rect x="317.2" y="117.4" width="1.2" height="5.8" fill="#ff1a1a"/><rect x="318.8" y="117.9" width="2" height="1.6" fill="#e6d25a"/><rect x="320.4" y="116.9" width="1.2" height="2.3" fill="#ff1a1a"/><rect x="322.0" y="114.4" width="1.2" height="4.5" fill="#ff1a1a"/><rect x="323.6" y="112.1" width="1.2" height="5.1" fill="#ff1a1a"/><rect x="325.2" y="110.7" width="1.2" height="2.6" fill="#ff1a1a"/><rect x="326.8" y="105.6" width="1.2" height="6.9" fill="#ff1a1a"/><rect x="328.4" y="105.6" width="1.2" height="7.1" fill="#ff1a1a"/><rect x="330.0" y="101.3" width="1.2" height="8.0" fill="#ff1a1a"/><rect x="331.6" y="96.9" width="1.2" height="9.3" fill="#ff1a1a"/><rect x="333.2" y="93.5" width="1.2" height="5.6" fill="#ff1a1a"/><rect x="334.8" y="93.4" width="1.2" height="3.5" fill="#2a8cff"/><rect x="336.4" y="95.3" width="1.2" height="5.8" fill="#2a8cff"/><rect x="338.0" y="96.0" width="2" height="1.6" fill="#e6d25a"/><rect x="339.6" y="96.0" width="1.2" height="3.1" fill="#2a8cff"/><rect x="341.2" y="96.1" width="1.2" height="2.8" fill="#ff1a1a"/><rect x="342.8" y="96.3" width="1.2" height="6.1" fill="#2a8cff"/><rect x="344.4" y="96.9" width="1.2" height="3.3" fill="#ff1a1a"/><rect x="346.0" y="97.7" width="1.2" height="1.5" fill="#2a8cff"/><rect x="347.6" y="97.9" width="1.2" height="4.4" fill="#2a8cff"/><rect x="349.2" y="100.1" width="1.2" height="3.5" fill="#2a8cff"/><rect x="350.8" y="102.2" width="1.2" height="4.5" fill="#2a8cff"/><rect x="352.4" y="104.5" width="1.2" height="3.3" fill="#2a8cff"/><rect x="354.0" y="102.1" width="1.2" height="7.7" fill="#2a8cff"/><rect x="355.6" y="107.2" width="1.2" height="4.7" fill="#2a8cff"/><rect x="357.2" y="110.3" width="1.2" height="3.5" fill="#2a8cff"/><rect x="358.8" y="112.3" width="2" height="1.6" fill="#e6d25a"/><rect x="360.4" y="112.4" width="2" height="1.6" fill="#e6d25a"/><rect x="362.0" y="112.8" width="1.2" height="3.4" fill="#2a8cff"/><rect x="363.6" y="112.3" width="1.2" height="6.8" fill="#ff1a1a"/><rect x="365.2" y="110.8" width="1.2" height="2.9" fill="#ff1a1a"/><rect x="366.8" y="105.3" width="2" height="1.6" fill="#e6d25a"/><rect x="368.4" y="106.1" width="2" height="1.6" fill="#e6d25a"/><rect x="370.0" y="104.7" width="2" height="1.6" fill="#e6d25a"/><rect x="371.6" y="104.0" width="1.2" height="2.7" fill="#ff1a1a"/><rect x="373.2" y="103.8" width="1.2" height="2.6" fill="#2a8cff"/><rect x="374.8" y="105.3" width="2" height="1.6" fill="#e6d25a"/><rect x="376.4" y="105.1" width="2" height="1.6" fill="#e6d25a"/><rect x="378.0" y="102.9" width="1.2" height="8.5" fill="#2a8cff"/><rect x="379.6" y="109.3" width="1.2" height="6.5" fill="#2a8cff"/><rect x="381.2" y="114.2" width="2" height="1.6" fill="#e6d25a"/><rect x="382.8" y="110.1" width="1.2" height="7.6" fill="#ff1a1a"/><rect x="384.4" y="102.1" width="1.2" height="9.9" fill="#ff1a1a"/><rect x="386.0" y="109.9" width="2" height="1.6" fill="#e6d25a"/><rect x="387.6" y="110.1" width="1.2" height="4.5" fill="#2a8cff"/><rect x="389.2" y="111.3" width="1.2" height="7.4" fill="#2a8cff"/><rect x="390.8" y="115.2" width="2" height="1.6" fill="#e6d25a"/><rect x="392.4" y="114.5" width="1.2" height="3.9" fill="#ff1a1a"/><rect x="394.0" y="113.7" width="2" height="1.6" fill="#e6d25a"/><rect x="395.6" y="111.3" width="2" height="1.6" fill="#e6d25a"/><rect x="397.2" y="111.5" width="1.2" height="5.2" fill="#2a8cff"/><rect x="398.8" y="112.2" width="2" height="1.6" fill="#e6d25a"/><rect x="400.4" y="111.7" width="1.2" height="3.8" fill="#2a8cff"/><rect x="402.0" y="112.4" width="2" height="1.6" fill="#e6d25a"/><rect x="403.6" y="105.3" width="1.2" height="9.1" fill="#ff1a1a"/><rect x="405.2" y="100.4" width="1.2" height="9.6" fill="#ff1a1a"/><rect x="406.8" y="95.4" width="2" height="1.6" fill="#e6d25a"/><rect x="408.4" y="92.5" width="1.2" height="4.8" fill="#ff1a1a"/><rect x="410.0" y="91.5" width="1.2" height="2.8" fill="#ff1a1a"/><rect x="411.6" y="90.7" width="1.2" height="3.7" fill="#2a8cff"/><rect x="413.2" y="90.3" width="1.2" height="5.5" fill="#ff1a1a"/><rect x="414.8" y="90.3" width="1.2" height="3.7" fill="#2a8cff"/><rect x="416.4" y="92.1" width="2" height="1.6" fill="#e6d25a"/><rect x="418.0" y="88.3" width="1.2" height="5.7" fill="#ff1a1a"/><rect x="419.6" y="91.2" width="1.2" height="5.9" fill="#2a8cff"/><rect x="421.2" y="93.3" width="1.2" height="5.1" fill="#2a8cff"/><rect x="422.8" y="96.8" width="1.2" height="2.6" fill="#2a8cff"/><rect x="424.4" y="97.5" width="2" height="1.6" fill="#e6d25a"/><rect x="426.0" y="96.6" width="2" height="1.6" fill="#e6d25a"/><rect x="427.6" y="96.3" width="1.2" height="3.4" fill="#2a8cff"/><rect x="429.2" y="94.3" width="1.2" height="7.8" fill="#ff1a1a"/><rect x="430.8" y="90.9" width="1.2" height="6.2" fill="#2a8cff"/><rect x="432.4" y="95.5" width="1.2" height="4.2" fill="#2a8cff"/><rect x="434.0" y="96.3" width="1.2" height="4.9" fill="#ff1a1a"/><rect x="435.6" y="96.2" width="1.2" height="5.4" fill="#2a8cff"/><rect x="437.2" y="96.7" width="1.2" height="4.6" fill="#2a8cff"/><rect x="438.8" y="93.2" width="1.2" height="8.2" fill="#ff1a1a"/><rect x="440.4" y="94.3" width="2" height="1.6" fill="#e6d25a"/><rect x="442.0" y="94.1" width="1.2" height="2.5" fill="#2a8cff"/><rect x="443.6" y="90.1" width="1.2" height="6.9" fill="#ff1a1a"/><rect x="445.2" y="92.3" width="1.2" height="2.1" fill="#ff1a1a"/><rect x="446.8" y="92.2" width="2" height="1.6" fill="#e6d25a"/><rect x="448.4" y="90.1" width="1.2" height="7.8" fill="#ff1a1a"/><rect x="450.0" y="85.1" width="1.2" height="7.4" fill="#ff1a1a"/><rect x="451.6" y="85.0" width="2" height="1.6" fill="#e6d25a"/><rect x="453.2" y="82.8" width="1.2" height="3.6" fill="#ff1a1a"/><rect x="454.8" y="80.1" width="2" height="1.6" fill="#e6d25a"/><rect x="456.4" y="76.7" width="1.2" height="7.9" fill="#ff1a1a"/><rect x="458.0" y="75.9" width="1.2" height="2.6" fill="#ff1a1a"/><rect x="459.6" y="75.4" width="1.2" height="7.2" fill="#2a8cff"/><rect x="461.2" y="78.2" width="2" height="1.6" fill="#e6d25a"/><rect x="462.8" y="78.7" width="2" height="1.6" fill="#e6d25a"/><rect x="464.4" y="78.2" width="1.2" height="3.6" fill="#2a8cff"/><rect x="466.0" y="84.3" width="2" height="1.6" fill="#e6d25a"/><rect x="467.6" y="87.9" width="2" height="1.6" fill="#e6d25a"/><rect x="469.2" y="88.3" width="2" height="1.6" fill="#e6d25a"/><rect x="470.8" y="88.2" width="2" height="1.6" fill="#e6d25a"/><rect x="472.4" y="87.8" width="2" height="1.6" fill="#e6d25a"/><rect x="474.0" y="85.1" width="1.2" height="6.9" fill="#ff1a1a"/><rect x="475.6" y="85.2" width="2" height="1.6" fill="#e6d25a"/><rect x="477.2" y="85.6" width="2" height="1.6" fill="#e6d25a"/><rect x="478.8" y="85.9" width="1.2" height="5.0" fill="#2a8cff"/><rect x="480.4" y="88.8" width="1.2" height="5.2" fill="#2a8cff"/><rect x="482.0" y="95.1" width="2" height="1.6" fill="#e6d25a"/><rect x="483.6" y="91.0" width="1.2" height="8.4" fill="#2a8cff"/><rect x="485.2" y="100.1" width="2" height="1.6" fill="#e6d25a"/><rect x="486.8" y="97.3" width="1.2" height="8.3" fill="#ff1a1a"/><rect x="488.4" y="97.9" width="2" height="1.6" fill="#e6d25a"/><rect x="490.0" y="95.8" width="1.2" height="7.2" fill="#ff1a1a"/><rect x="491.6" y="94.2" width="1.2" height="5.6" fill="#2a8cff"/><rect x="493.2" y="97.4" width="1.2" height="5.7" fill="#2a8cff"/><rect x="494.8" y="99.6" width="1.2" height="5.7" fill="#2a8cff"/><rect x="496.4" y="103.2" width="1.2" height="3.0" fill="#2a8cff"/><rect x="498.0" y="107.4" width="2" height="1.6" fill="#e6d25a"/><rect x="499.6" y="107.8" width="1.2" height="4.8" fill="#2a8cff"/><rect x="501.2" y="105.4" width="1.2" height="6.9" fill="#ff1a1a"/><rect x="502.8" y="99.3" width="1.2" height="7.9" fill="#ff1a1a"/><rect x="504.4" y="97.7" width="1.2" height="3.1" fill="#ff1a1a"/><rect x="506.0" y="98.1" width="1.2" height="2.9" fill="#2a8cff"/><rect x="507.6" y="98.7" width="1.2" height="2.5" fill="#ff1a1a"/><rect x="509.2" y="96.3" width="1.2" height="6.0" fill="#ff1a1a"/><rect x="510.8" y="92.6" width="1.2" height="4.5" fill="#ff1a1a"/><rect x="512.4" y="88.0" width="1.2" height="6.6" fill="#ff1a1a"/><rect x="514.0" y="84.7" width="1.2" height="6.6" fill="#ff1a1a"/><rect x="515.6" y="83.1" width="1.2" height="3.5" fill="#ff1a1a"/><rect x="517.2" y="79.6" width="1.2" height="5.3" fill="#ff1a1a"/><rect x="518.8" y="79.5" width="2" height="1.6" fill="#e6d25a"/><rect x="520.4" y="74.9" width="2" height="1.6" fill="#e6d25a"/><rect x="522.0" y="72.2" width="1.2" height="4.0" fill="#ff1a1a"/><rect x="523.6" y="74.4" width="1.2" height="9.4" fill="#2a8cff"/><rect x="525.2" y="81.8" width="2" height="1.6" fill="#e6d25a"/><rect x="526.8" y="81.8" width="1.2" height="5.0" fill="#2a8cff"/><rect x="528.4" y="83.2" width="1.2" height="3.6" fill="#ff1a1a"/><rect x="530.0" y="81.7" width="1.2" height="3.9" fill="#ff1a1a"/><rect x="531.6" y="82.0" width="2" height="1.6" fill="#e6d25a"/><rect x="533.2" y="82.2" width="1.2" height="6.4" fill="#2a8cff"/><rect x="534.8" y="82.4" width="1.2" height="2.4" fill="#ff1a1a"/><rect x="536.4" y="83.9" width="2" height="1.6" fill="#e6d25a"/><rect x="538.0" y="83.9" width="1.2" height="2.5" fill="#2a8cff"/><rect x="539.6" y="82.1" width="1.2" height="4.6" fill="#ff1a1a"/><rect x="541.2" y="83.2" width="2" height="1.6" fill="#e6d25a"/><rect x="542.8" y="80.3" width="1.2" height="5.0" fill="#ff1a1a"/><rect x="544.4" y="79.1" width="1.2" height="2.8" fill="#ff1a1a"/><rect x="546.0" y="79.7" width="1.2" height="3.8" fill="#2a8cff"/><rect x="547.6" y="81.6" width="2" height="1.6" fill="#e6d25a"/><rect x="549.2" y="81.3" width="2" height="1.6" fill="#e6d25a"/><rect x="550.8" y="79.0" width="1.2" height="6.7" fill="#2a8cff"/><rect x="552.4" y="84.3" width="2" height="1.6" fill="#e6d25a"/><rect x="554.0" y="84.0" width="1.2" height="3.7" fill="#2a8cff"/><rect x="555.6" y="85.9" width="2" height="1.6" fill="#e6d25a"/><rect x="557.2" y="84.4" width="1.2" height="7.4" fill="#ff1a1a"/><rect x="558.8" y="82.6" width="1.2" height="6.3" fill="#ff1a1a"/><rect x="560.4" y="83.5" width="2" height="1.6" fill="#e6d25a"/><rect x="562.0" y="81.1" width="1.2" height="4.4" fill="#ff1a1a"/><rect x="563.6" y="81.1" width="2" height="1.6" fill="#e6d25a"/><rect x="565.2" y="79.6" width="1.2" height="3.3" fill="#ff1a1a"/><rect x="566.8" y="79.4" width="2" height="1.6" fill="#e6d25a"/><rect x="568.4" y="79.5" width="2" height="1.6" fill="#e6d25a"/><rect x="570.0" y="79.0" width="1.2" height="3.3" fill="#2a8cff"/><rect x="571.6" y="80.8" width="1.2" height="2.8" fill="#2a8cff"/><rect x="573.2" y="81.1" width="1.2" height="2.9" fill="#2a8cff"/><rect x="574.8" y="79.5" width="1.2" height="5.5" fill="#2a8cff"/><rect x="576.4" y="82.4" width="1.2" height="3.3" fill="#ff1a1a"/><rect x="578.0" y="81.0" width="1.2" height="2.8" fill="#ff1a1a"/><rect x="579.6" y="80.2" width="1.2" height="2.6" fill="#ff1a1a"/><rect x="581.2" y="78.5" width="1.2" height="3.1" fill="#ff1a1a"/><rect x="582.8" y="77.7" width="1.2" height="2.3" fill="#2a8cff"/><rect x="584.4" y="78.3" width="1.2" height="5.7" fill="#2a8cff"/><rect x="586.0" y="81.4" width="1.2" height="2.3" fill="#ff1a1a"/><rect x="587.6" y="81.7" width="1.2" height="4.3" fill="#2a8cff"/><rect x="589.2" y="84.6" width="2" height="1.6" fill="#e6d25a"/><rect x="590.8" y="85.0" width="2" height="1.6" fill="#e6d25a"/><rect x="592.4" y="84.5" width="2" height="1.6" fill="#e6d25a"/><rect x="594.0" y="83.6" width="1.2" height="2.6" fill="#ff1a1a"/><rect x="595.6" y="82.2" width="1.2" height="3.3" fill="#ff1a1a"/><rect x="597.2" y="81.4" width="2" height="1.6" fill="#e6d25a"/><rect x="598.8" y="78.5" width="1.2" height="6.9" fill="#ff1a1a"/><rect x="600.4" y="75.5" width="1.2" height="4.7" fill="#ff1a1a"/><rect x="602.0" y="70.9" width="1.2" height="6.7" fill="#ff1a1a"/><rect x="603.6" y="70.5" width="1.2" height="7.6" fill="#ff1a1a"/><rect x="605.2" y="69.2" width="1.2" height="3.2" fill="#ff1a1a"/><rect x="606.8" y="69.4" width="1.2" height="2.7" fill="#2a8cff"/><rect x="608.4" y="69.3" width="1.2" height="5.7" fill="#ff1a1a"/><rect x="610.0" y="63.5" width="1.2" height="7.5" fill="#ff1a1a"/><rect x="611.6" y="66.1" width="1.2" height="2.5" fill="#ff1a1a"/><rect x="613.2" y="66.2" width="1.2" height="6.5" fill="#2a8cff"/><rect x="614.8" y="69.5" width="1.2" height="7.0" fill="#2a8cff"/><rect x="616.4" y="74.7" width="1.2" height="8.2" fill="#2a8cff"/><rect x="618.0" y="78.4" width="2" height="1.6" fill="#e6d25a"/><rect x="619.6" y="74.1" width="1.2" height="5.6" fill="#ff1a1a"/><rect x="621.2" y="68.9" width="1.2" height="8.3" fill="#ff1a1a"/><rect x="622.8" y="69.0" width="1.2" height="6.7" fill="#2a8cff"/><rect x="624.4" y="76.8" width="2" height="1.6" fill="#e6d25a"/><rect x="626.0" y="76.8" width="1.2" height="5.7" fill="#2a8cff"/><rect x="627.6" y="79.1" width="1.2" height="10.1" fill="#2a8cff"/><rect x="629.2" y="90.1" width="2" height="1.6" fill="#e6d25a"/><rect x="630.8" y="88.7" width="2" height="1.6" fill="#e6d25a"/><rect x="632.4" y="89.1" width="2" height="1.6" fill="#e6d25a"/><rect x="634.0" y="87.3" width="1.2" height="5.6" fill="#ff1a1a"/><rect x="635.6" y="86.0" width="1.2" height="3.1" fill="#ff1a1a"/><rect x="637.2" y="87.0" width="2" height="1.6" fill="#e6d25a"/><rect x="638.8" y="87.0" width="2" height="1.6" fill="#e6d25a"/><rect x="640.4" y="85.8" width="1.2" height="3.8" fill="#ff1a1a"/><rect x="642.0" y="85.1" width="1.2" height="2.1" fill="#ff1a1a"/><rect x="643.6" y="80.6" width="1.2" height="6.0" fill="#ff1a1a"/><rect x="645.2" y="82.6" width="1.2" height="3.4" fill="#ff1a1a"/><rect x="646.8" y="79.6" width="1.2" height="4.8" fill="#ff1a1a"/><rect x="648.4" y="81.2" width="1.2" height="6.1" fill="#ff1a1a"/><rect x="650.0" y="80.2" width="2" height="1.6" fill="#e6d25a"/><rect x="651.6" y="79.6" width="1.2" height="5.0" fill="#ff1a1a"/><rect x="653.2" y="78.1" width="2" height="1.6" fill="#e6d25a"/><rect x="654.8" y="77.5" width="1.2" height="4.4" fill="#2a8cff"/><rect x="656.4" y="79.2" width="1.2" height="5.7" fill="#2a8cff"/><rect x="658.0" y="82.5" width="1.2" height="3.7" fill="#2a8cff"/><rect x="659.6" y="88.0" width="2" height="1.6" fill="#e6d25a"/><rect x="661.2" y="87.6" width="1.2" height="5.5" fill="#2a8cff"/><rect x="662.8" y="91.4" width="1.2" height="3.9" fill="#2a8cff"/><rect x="664.4" y="95.2" width="2" height="1.6" fill="#e6d25a"/><rect x="666.0" y="94.3" width="1.2" height="2.6" fill="#ff1a1a"/><rect x="667.6" y="93.8" width="1.2" height="4.1" fill="#2a8cff"/><rect x="669.2" y="96.2" width="1.2" height="3.9" fill="#2a8cff"/><rect x="670.8" y="96.6" width="1.2" height="2.8" fill="#ff1a1a"/><rect x="672.4" y="95.4" width="2" height="1.6" fill="#e6d25a"/><rect x="674.0" y="93.2" width="1.2" height="4.6" fill="#2a8cff"/><rect x="675.6" y="93.6" width="1.2" height="3.7" fill="#ff1a1a"/><rect x="677.2" y="86.1" width="1.2" height="10.1" fill="#ff1a1a"/><rect x="678.8" y="78.9" width="1.2" height="8.6" fill="#ff1a1a"/><rect x="680.4" y="69.3" width="1.2" height="13.1" fill="#ff1a1a"/><rect x="682.0" y="54.4" width="1.2" height="16.2" fill="#ff1a1a"/><rect x="683.6" y="43.2" width="1.2" height="13.1" fill="#ff1a1a"/><rect x="685.2" y="43.1" width="1.2" height="10.4" fill="#2a8cff"/><rect x="686.8" y="51.9" width="1.2" height="7.2" fill="#2a8cff"/><rect x="688.4" y="56.8" width="1.2" height="9.6" fill="#2a8cff"/><rect x="690.0" y="64.8" width="1.2" height="6.9" fill="#2a8cff"/><rect x="691.6" y="66.7" width="2" height="1.6" fill="#e6d25a"/><rect x="693.2" y="61.8" width="1.2" height="6.5" fill="#ff1a1a"/><rect x="694.8" y="60.3" width="1.2" height="2.8" fill="#ff1a1a"/><rect x="696.4" y="60.6" width="2" height="1.6" fill="#e6d25a"/><rect x="698.0" y="60.1" width="2" height="1.6" fill="#e6d25a"/><rect x="699.6" y="59.3" width="1.2" height="4.4" fill="#ff1a1a"/><rect x="701.2" y="59.6" width="2" height="1.6" fill="#e6d25a"/><rect x="702.8" y="57.7" width="1.2" height="6.7" fill="#2a8cff"/><rect x="704.4" y="63.2" width="2" height="1.6" fill="#e6d25a"/><rect x="706.0" y="62.8" width="1.2" height="8.3" fill="#2a8cff"/><rect x="707.6" y="67.4" width="1.2" height="6.5" fill="#2a8cff"/><rect x="709.2" y="72.5" width="1.2" height="9.3" fill="#2a8cff"/><rect x="710.8" y="77.3" width="1.2" height="5.3" fill="#2a8cff"/><rect x="712.4" y="80.9" width="1.2" height="11.5" fill="#2a8cff"/><rect x="714.0" y="87.2" width="1.2" height="6.8" fill="#2a8cff"/><rect x="715.6" y="91.9" width="1.2" height="4.7" fill="#2a8cff"/><rect x="717.2" y="92.5" width="1.2" height="7.0" fill="#2a8cff"/><rect x="718.8" y="93.8" width="1.2" height="5.9" fill="#ff1a1a"/><rect x="720.4" y="88.6" width="1.2" height="6.8" fill="#ff1a1a"/><rect x="722.0" y="88.5" width="1.2" height="5.2" fill="#2a8cff"/><rect x="723.6" y="91.5" width="1.2" height="8.3" fill="#2a8cff"/><rect x="725.2" y="102.6" width="2" height="1.6" fill="#e6d25a"/><rect x="726.8" y="91.2" width="1.2" height="15.2" fill="#ff1a1a"/><rect x="728.4" y="77.0" width="1.2" height="15.4" fill="#ff1a1a"/><rect x="730.0" y="71.1" width="1.2" height="9.2" fill="#ff1a1a"/><rect x="731.6" y="71.1" width="1.2" height="2.6" fill="#2a8cff"/><rect x="733.2" y="71.9" width="1.2" height="4.3" fill="#2a8cff"/><rect x="736.4" y="92.3" width="1.2" height="3.2" fill="#ff1a1a"/><rect x="738.0" y="91.9" width="1.2" height="6.3" fill="#2a8cff"/><rect x="739.6" y="96.1" width="1.2" height="3.7" fill="#2a8cff"/><rect x="741.2" y="96.9" width="1.2" height="3.0" fill="#ff1a1a"/><rect x="742.8" y="89.8" width="1.2" height="10.2" fill="#ff1a1a"/><rect x="744.4" y="82.9" width="1.2" height="9.0" fill="#ff1a1a"/><rect x="746.0" y="80.2" width="1.2" height="7.9" fill="#ff1a1a"/><rect x="747.6" y="75.2" width="1.2" height="6.4" fill="#ff1a1a"/><rect x="749.2" y="69.0" width="2" height="1.6" fill="#e6d25a"/><rect x="750.8" y="64.1" width="2" height="1.6" fill="#e6d25a"/><rect x="752.4" y="61.4" width="1.2" height="6.2" fill="#2a8cff"/><rect x="754.0" y="65.3" width="2" height="1.6" fill="#e6d25a"/><rect x="755.6" y="65.2" width="1.2" height="3.7" fill="#2a8cff"/><rect x="757.2" y="67.4" width="1.2" height="5.6" fill="#2a8cff"/><rect x="758.8" y="70.0" width="2" height="1.6" fill="#e6d25a"/><rect x="760.4" y="64.1" width="1.2" height="7.6" fill="#ff1a1a"/><rect x="762.0" y="60.6" width="1.2" height="5.3" fill="#ff1a1a"/><rect x="763.6" y="56.3" width="1.2" height="6.1" fill="#ff1a1a"/><rect x="765.2" y="53.7" width="2" height="1.6" fill="#e6d25a"/><rect x="766.8" y="51.1" width="1.2" height="4.5" fill="#ff1a1a"/><rect x="768.4" y="50.3" width="1.2" height="2.5" fill="#ff1a1a"/><rect x="770.0" y="49.6" width="1.2" height="4.6" fill="#2a8cff"/><rect x="771.6" y="54.1" width="2" height="1.6" fill="#e6d25a"/><rect x="773.2" y="52.8" width="1.2" height="5.2" fill="#2a8cff"/><rect x="774.8" y="59.6" width="2" height="1.6" fill="#e6d25a"/><rect x="776.4" y="57.7" width="1.2" height="4.0" fill="#ff1a1a"/><rect x="778.0" y="53.6" width="1.2" height="6.2" fill="#ff1a1a"/><rect x="779.6" y="51.9" width="1.2" height="3.8" fill="#ff1a1a"/><rect x="781.2" y="51.0" width="2" height="1.6" fill="#e6d25a"/><rect x="782.8" y="47.5" width="2" height="1.6" fill="#e6d25a"/><rect x="784.4" y="47.8" width="2" height="1.6" fill="#e6d25a"/><rect x="786.0" y="44.4" width="1.2" height="5.2" fill="#2a8cff"/><rect x="787.6" y="48.3" width="1.2" height="4.9" fill="#2a8cff"/><rect x="789.2" y="50.9" width="1.2" height="6.4" fill="#2a8cff"/><rect x="790.8" y="55.3" width="2" height="1.6" fill="#e6d25a"/><rect x="792.4" y="53.0" width="1.2" height="5.5" fill="#2a8cff"/><rect x="794.0" y="56.8" width="1.2" height="4.5" fill="#2a8cff"/><rect x="795.6" y="59.3" width="1.2" height="6.5" fill="#2a8cff"/><rect x="797.2" y="63.8" width="1.2" height="3.1" fill="#2a8cff"/><rect x="798.8" y="65.3" width="1.2" height="4.4" fill="#2a8cff"/><rect x="800.4" y="68.4" width="2" height="1.6" fill="#e6d25a"/><rect x="802.0" y="68.3" width="2" height="1.6" fill="#e6d25a"/><rect x="803.6" y="64.0" width="1.2" height="6.8" fill="#2a8cff"/><rect x="805.2" y="69.1" width="2" height="1.6" fill="#e6d25a"/><rect x="806.8" y="69.3" width="1.2" height="6.8" fill="#2a8cff"/><rect x="808.4" y="72.7" width="1.2" height="3.8" fill="#2a8cff"/><rect x="810.0" y="75.0" width="1.2" height="4.5" fill="#2a8cff"/><rect x="811.6" y="79.4" width="2" height="1.6" fill="#e6d25a"/><rect x="813.2" y="79.1" width="1.2" height="3.5" fill="#2a8cff"/><rect x="814.8" y="79.0" width="1.2" height="3.2" fill="#ff1a1a"/><rect x="816.4" y="72.5" width="1.2" height="8.4" fill="#ff1a1a"/><rect x="818.0" y="69.3" width="1.2" height="8.6" fill="#ff1a1a"/><rect x="819.6" y="73.7" width="1.2" height="5.5" fill="#2a8cff"/><rect x="821.2" y="74.3" width="1.2" height="9.1" fill="#2a8cff"/><rect x="822.8" y="81.8" width="2" height="1.6" fill="#e6d25a"/><rect x="824.4" y="82.0" width="1.2" height="5.1" fill="#2a8cff"/><rect x="826.0" y="85.9" width="1.2" height="4.1" fill="#2a8cff"/><rect x="827.6" y="88.7" width="2" height="1.6" fill="#e6d25a"/><rect x="829.2" y="87.0" width="2" height="1.6" fill="#e6d25a"/><rect x="830.8" y="85.9" width="2" height="1.6" fill="#e6d25a"/><rect x="832.4" y="84.7" width="1.2" height="3.2" fill="#ff1a1a"/><rect x="834.0" y="86.9" width="2" height="1.6" fill="#e6d25a"/><rect x="835.6" y="82.8" width="1.2" height="6.0" fill="#ff1a1a"/><rect x="837.2" y="84.2" width="1.2" height="2.8" fill="#ff1a1a"/><rect x="838.8" y="83.1" width="2" height="1.6" fill="#e6d25a"/><rect x="840.4" y="83.0" width="1.2" height="3.2" fill="#2a8cff"/><rect x="842.0" y="82.2" width="1.2" height="4.2" fill="#ff1a1a"/><rect x="843.6" y="81.3" width="1.2" height="4.9" fill="#2a8cff"/><rect x="845.2" y="82.9" width="2" height="1.6" fill="#e6d25a"/><rect x="846.8" y="81.3" width="1.2" height="3.0" fill="#ff1a1a"/><rect x="848.4" y="81.4" width="2" height="1.6" fill="#e6d25a"/><rect x="850.0" y="79.9" width="1.2" height="5.2" fill="#ff1a1a"/><rect x="851.6" y="80.9" width="1.2" height="3.2" fill="#2a8cff"/><rect x="853.2" y="79.9" width="1.2" height="5.0" fill="#2a8cff"/><rect x="854.8" y="85.6" width="2" height="1.6" fill="#e6d25a"/><rect x="856.4" y="83.8" width="1.2" height="3.5" fill="#ff1a1a"/><rect x="858.0" y="83.4" width="1.2" height="4.6" fill="#2a8cff"/><rect x="859.6" y="86.5" width="2" height="1.6" fill="#e6d25a"/><rect x="861.2" y="86.3" width="1.2" height="4.5" fill="#2a8cff"/><rect x="862.8" y="89.1" width="2" height="1.6" fill="#e6d25a"/><rect x="864.4" y="89.4" width="2" height="1.6" fill="#e6d25a"/><rect x="866.0" y="89.8" width="2" height="1.6" fill="#e6d25a"/><rect x="867.6" y="91.6" width="2" height="1.6" fill="#e6d25a"/><rect x="869.2" y="95.4" width="2" height="1.6" fill="#e6d25a"/><rect x="870.8" y="95.5" width="1.2" height="2.7" fill="#2a8cff"/><rect x="872.4" y="96.1" width="1.2" height="4.2" fill="#2a8cff"/><rect x="874.0" y="98.1" width="1.2" height="5.5" fill="#2a8cff"/><rect x="875.6" y="102.5" width="1.2" height="2.9" fill="#2a8cff"/><rect x="877.2" y="103.8" width="2" height="1.6" fill="#e6d25a"/><rect x="878.8" y="103.8" width="2" height="1.6" fill="#e6d25a"/><rect x="880.4" y="103.9" width="2" height="1.6" fill="#e6d25a"/><rect x="882.0" y="101.3" width="1.2" height="4.6" fill="#ff1a1a"/><rect x="883.6" y="100.7" width="1.2" height="1.7" fill="#ff1a1a"/><rect x="885.2" y="98.9" width="1.2" height="2.9" fill="#ff1a1a"/><rect x="886.8" y="89.8" width="1.2" height="11.0" fill="#ff1a1a"/><rect x="888.4" y="93.9" width="2" height="1.6" fill="#e6d25a"/><rect x="890.0" y="90.3" width="2" height="1.6" fill="#e6d25a"/><rect x="891.6" y="88.6" width="1.2" height="3.2" fill="#ff1a1a"/><rect x="893.2" y="86.2" width="1.2" height="4.1" fill="#ff1a1a"/><rect x="894.8" y="85.5" width="1.2" height="4.6" fill="#2a8cff"/><rect x="896.4" y="86.6" width="1.2" height="2.9" fill="#2a8cff"/><rect x="898.0" y="88.9" width="2" height="1.6" fill="#e6d25a"/><rect x="899.6" y="88.3" width="1.2" height="4.3" fill="#ff1a1a"/><rect x="901.2" y="88.6" width="2" height="1.6" fill="#e6d25a"/><rect x="902.8" y="88.7" width="2" height="1.6" fill="#e6d25a"/><rect x="904.4" y="88.3" width="1.2" height="4.7" fill="#2a8cff"/><rect x="906.0" y="88.5" width="2" height="1.6" fill="#e6d25a"/><rect x="907.6" y="87.8" width="1.2" height="2.4" fill="#ff1a1a"/><rect x="909.2" y="81.4" width="1.2" height="7.5" fill="#ff1a1a"/><rect x="910.8" y="84.4" width="2" height="1.6" fill="#e6d25a"/><rect x="912.4" y="84.3" width="1.2" height="4.5" fill="#2a8cff"/><rect x="914.0" y="88.1" width="2" height="1.6" fill="#e6d25a"/><rect x="915.6" y="87.7" width="2" height="1.6" fill="#e6d25a"/><rect x="917.2" y="89.2" width="2" height="1.6" fill="#e6d25a"/><rect x="918.8" y="89.4" width="2" height="1.6" fill="#e6d25a"/><rect x="920.4" y="92.3" width="2" height="1.6" fill="#e6d25a"/><rect x="922.0" y="92.8" width="2" height="1.6" fill="#e6d25a"/><rect x="923.6" y="91.0" width="1.2" height="3.5" fill="#ff1a1a"/><rect x="925.2" y="90.3" width="2" height="1.6" fill="#e6d25a"/><rect x="926.8" y="88.1" width="1.2" height="6.4" fill="#ff1a1a"/><rect x="928.4" y="86.2" width="1.2" height="3.6" fill="#ff1a1a"/><rect x="930.0" y="85.6" width="1.2" height="3.1" fill="#2a8cff"/><rect x="931.6" y="87.2" width="2" height="1.6" fill="#e6d25a"/><rect x="933.2" y="84.9" width="1.2" height="4.4" fill="#ff1a1a"/><rect x="934.8" y="83.3" width="1.2" height="3.6" fill="#ff1a1a"/><rect x="936.4" y="81.7" width="1.2" height="2.9" fill="#ff1a1a"/><rect x="938.0" y="78.1" width="1.2" height="5.6" fill="#ff1a1a"/><rect x="939.6" y="74.5" width="1.2" height="5.1" fill="#ff1a1a"/><rect x="941.2" y="73.9" width="1.2" height="3.1" fill="#ff1a1a"/><rect x="942.8" y="68.5" width="1.2" height="7.1" fill="#ff1a1a"/><rect x="944.4" y="63.1" width="1.2" height="9.0" fill="#ff1a1a"/><rect x="946.0" y="63.4" width="1.2" height="9.1" fill="#ff1a1a"/><rect x="947.6" y="62.5" width="1.2" height="3.4" fill="#ff1a1a"/><rect x="949.2" y="60.6" width="1.2" height="3.5" fill="#ff1a1a"/><rect x="950.8" y="60.7" width="1.2" height="3.1" fill="#2a8cff"/><rect x="952.4" y="61.9" width="2" height="1.6" fill="#e6d25a"/><rect x="954.0" y="60.7" width="1.2" height="2.9" fill="#ff1a1a"/><rect x="955.6" y="60.5" width="2" height="1.6" fill="#e6d25a"/><rect x="957.2" y="57.6" width="1.2" height="4.5" fill="#ff1a1a"/><rect x="958.8" y="58.1" width="2" height="1.6" fill="#e6d25a"/><rect x="960.4" y="54.7" width="1.2" height="4.7" fill="#ff1a1a"/><rect x="962.0" y="55.2" width="1.2" height="2.6" fill="#2a8cff"/><rect x="963.6" y="54.0" width="1.2" height="6.8" fill="#ff1a1a"/><rect x="965.2" y="54.0" width="1.2" height="7.3" fill="#2a8cff"/><rect x="966.8" y="56.1" width="2" height="1.6" fill="#e6d25a"/><rect x="968.4" y="56.5" width="1.2" height="2.1" fill="#2a8cff"/></g>
<g clip-path="url(#c2)"><rect x="31.9" y="291.9" width="2" height="1.6" fill="#e6d25a"/><rect x="33.8" y="289.1" width="1.2" height="4.2" fill="#ff1a1a"/><rect x="35.7" y="296.1" width="2" height="1.6" fill="#e6d25a"/><rect x="37.6" y="295.5" width="1.2" height="5.6" fill="#2a8cff"/><rect x="45.2" y="292.3" width="1.2" height="3.3" fill="#ff1a1a"/><rect x="47.1" y="292.0" width="1.2" height="4.0" fill="#2a8cff"/><rect x="58.5" y="306.2" width="2" height="1.6" fill="#e6d25a"/><rect x="62.3" y="301.1" width="1.2" height="4.4" fill="#ff1a1a"/><rect x="64.2" y="299.7" width="1.2" height="3.5" fill="#ff1a1a"/><rect x="68.0" y="293.8" width="1.2" height="4.9" fill="#ff1a1a"/><rect x="69.9" y="293.5" width="1.2" height="3.5" fill="#2a8cff"/><rect x="73.7" y="302.6" width="1.2" height="6.1" fill="#2a8cff"/><rect x="75.6" y="307.2" width="1.2" height="6.2" fill="#2a8cff"/><rect x="81.3" y="258.7" width="2" height="1.6" fill="#e6d25a"/><rect x="83.2" y="258.6" width="1.2" height="16.5" fill="#2a8cff"/><rect x="85.1" y="264.7" width="1.2" height="7.2" fill="#ff1a1a"/><rect x="87.0" y="253.6" width="1.2" height="12.4" fill="#ff1a1a"/><rect x="90.8" y="236.7" width="1.2" height="12.2" fill="#ff1a1a"/><rect x="94.6" y="219.9" width="1.2" height="9.8" fill="#ff1a1a"/><rect x="96.5" y="227.1" width="2" height="1.6" fill="#e6d25a"/><rect x="98.4" y="222.8" width="1.2" height="10.6" fill="#2a8cff"/><rect x="100.3" y="231.9" width="1.2" height="6.4" fill="#2a8cff"/><rect x="102.2" y="249.4" width="2" height="1.6" fill="#e6d25a"/><rect x="104.1" y="249.4" width="1.2" height="14.7" fill="#2a8cff"/><rect x="106.0" y="261.9" width="1.2" height="8.2" fill="#2a8cff"/><rect x="107.9" y="268.0" width="1.2" height="8.0" fill="#2a8cff"/><rect x="109.8" y="275.7" width="2" height="1.6" fill="#e6d25a"/><rect x="111.7" y="270.8" width="1.2" height="6.9" fill="#ff1a1a"/><rect x="113.6" y="262.5" width="1.2" height="9.4" fill="#ff1a1a"/><rect x="117.4" y="255.7" width="1.2" height="7.8" fill="#2a8cff"/><rect x="119.3" y="258.0" width="1.2" height="8.8" fill="#2a8cff"/><rect x="121.2" y="264.8" width="1.2" height="8.1" fill="#2a8cff"/><rect x="123.1" y="267.6" width="1.2" height="6.4" fill="#ff1a1a"/><rect x="125.0" y="266.3" width="2" height="1.6" fill="#e6d25a"/><rect x="128.8" y="261.0" width="2" height="1.6" fill="#e6d25a"/><rect x="130.7" y="255.4" width="1.2" height="7.7" fill="#ff1a1a"/><rect x="132.6" y="255.8" width="1.2" height="4.4" fill="#ff1a1a"/><rect x="136.4" y="252.9" width="1.2" height="3.2" fill="#ff1a1a"/><rect x="138.3" y="250.8" width="1.2" height="3.6" fill="#ff1a1a"/><rect x="140.2" y="248.0" width="1.2" height="4.5" fill="#ff1a1a"/><rect x="144.0" y="239.8" width="1.2" height="5.8" fill="#ff1a1a"/><rect x="145.9" y="237.7" width="1.2" height="3.8" fill="#ff1a1a"/><rect x="147.8" y="237.3" width="1.2" height="8.9" fill="#2a8cff"/><rect x="149.7" y="237.6" width="1.2" height="7.4" fill="#2a8cff"/><rect x="151.6" y="243.6" width="1.2" height="6.0" fill="#2a8cff"/><rect x="153.5" y="247.5" width="1.2" height="7.2" fill="#2a8cff"/><rect x="157.3" y="250.4" width="1.2" height="3.9" fill="#ff1a1a"/><rect x="159.2" y="246.0" width="1.2" height="6.0" fill="#ff1a1a"/><rect x="161.1" y="248.1" width="1.2" height="2.1" fill="#ff1a1a"/><rect x="164.9" y="242.5" width="2" height="1.6" fill="#e6d25a"/><rect x="166.8" y="239.9" width="1.2" height="3.9" fill="#ff1a1a"/><rect x="168.7" y="239.2" width="2" height="1.6" fill="#e6d25a"/><rect x="170.6" y="236.0" width="1.2" height="5.0" fill="#ff1a1a"/><rect x="172.5" y="231.3" width="1.2" height="7.4" fill="#ff1a1a"/><rect x="174.4" y="229.7" width="1.2" height="4.7" fill="#ff1a1a"/><rect x="176.3" y="229.9" width="1.2" height="9.9" fill="#2a8cff"/><rect x="182.0" y="264.8" width="1.2" height="3.7" fill="#2a8cff"/><rect x="183.9" y="265.3" width="1.2" height="6.5" fill="#2a8cff"/><rect x="185.8" y="271.3" width="2" height="1.6" fill="#e6d25a"/><rect x="189.6" y="272.9" width="1.2" height="4.4" fill="#2a8cff"/><rect x="195.3" y="277.7" width="2" height="1.6" fill="#e6d25a"/><rect x="199.1" y="276.0" width="1.2" height="4.7" fill="#2a8cff"/><rect x="201.0" y="277.9" width="2" height="1.6" fill="#e6d25a"/><rect x="202.9" y="278.2" width="2" height="1.6" fill="#e6d25a"/><rect x="204.8" y="280.0" width="2" height="1.6" fill="#e6d25a"/><rect x="208.6" y="278.2" width="2" height="1.6" fill="#e6d25a"/><rect x="210.5" y="275.1" width="1.2" height="8.7" fill="#ff1a1a"/><rect x="214.3" y="272.9" width="2" height="1.6" fill="#e6d25a"/><rect x="216.2" y="272.8" width="1.2" height="5.8" fill="#2a8cff"/><rect x="223.8" y="272.8" width="1.2" height="3.2" fill="#ff1a1a"/><rect x="225.7" y="272.8" width="1.2" height="3.9" fill="#2a8cff"/><rect x="229.5" y="274.9" width="2" height="1.6" fill="#e6d25a"/><rect x="233.3" y="274.3" width="1.2" height="4.5" fill="#ff1a1a"/><rect x="235.2" y="274.2" width="1.2" height="2.3" fill="#2a8cff"/><rect x="239.0" y="265.3" width="1.2" height="8.0" fill="#ff1a1a"/><rect x="240.9" y="263.2" width="1.2" height="8.6" fill="#ff1a1a"/><rect x="242.8" y="260.9" width="1.2" height="3.9" fill="#ff1a1a"/><rect x="244.7" y="256.5" width="1.2" height="6.4" fill="#ff1a1a"/><rect x="248.5" y="255.7" width="1.2" height="5.4" fill="#2a8cff"/><rect x="250.4" y="259.2" width="1.2" height="6.4" fill="#2a8cff"/><rect x="254.2" y="266.5" width="1.2" height="5.0" fill="#2a8cff"/><rect x="265.6" y="277.3" width="1.2" height="2.8" fill="#ff1a1a"/><rect x="271.3" y="278.6" width="2" height="1.6" fill="#e6d25a"/><rect x="275.1" y="279.7" width="2" height="1.6" fill="#e6d25a"/><rect x="278.9" y="277.9" width="2" height="1.6" fill="#e6d25a"/><rect x="280.8" y="272.6" width="1.2" height="7.2" fill="#ff1a1a"/><rect x="284.6" y="268.6" width="1.2" height="3.5" fill="#ff1a1a"/><rect x="288.4" y="269.7" width="1.2" height="3.7" fill="#2a8cff"/><rect x="292.2" y="270.9" width="1.2" height="5.8" fill="#2a8cff"/><rect x="299.8" y="274.9" width="2" height="1.6" fill="#e6d25a"/><rect x="307.4" y="280.0" width="1.2" height="4.6" fill="#ff1a1a"/><rect x="309.3" y="280.4" width="1.2" height="3.1" fill="#2a8cff"/><rect x="311.2" y="282.0" width="1.2" height="5.7" fill="#2a8cff"/><rect x="313.1" y="283.3" width="2" height="1.6" fill="#e6d25a"/><rect x="315.0" y="284.6" width="2" height="1.6" fill="#e6d25a"/><rect x="316.9" y="284.5" width="2" height="1.6" fill="#e6d25a"/><rect x="318.8" y="282.9" width="1.2" height="3.3" fill="#ff1a1a"/><rect x="322.6" y="278.5" width="2" height="1.6" fill="#e6d25a"/><rect x="324.5" y="278.4" width="2" height="1.6" fill="#e6d25a"/><rect x="326.4" y="278.2" width="2" height="1.6" fill="#e6d25a"/><rect x="334.0" y="273.1" width="1.2" height="3.6" fill="#2a8cff"/><rect x="335.9" y="274.7" width="2" height="1.6" fill="#e6d25a"/><rect x="337.8" y="275.0" width="1.2" height="2.5" fill="#2a8cff"/><rect x="341.6" y="276.4" width="1.2" height="3.2" fill="#2a8cff"/><rect x="345.4" y="277.4" width="1.2" height="2.7" fill="#2a8cff"/><rect x="349.2" y="274.3" width="1.2" height="5.2" fill="#ff1a1a"/><rect x="351.1" y="271.7" width="1.2" height="6.9" fill="#ff1a1a"/><rect x="360.6" y="273.9" width="1.2" height="6.4" fill="#2a8cff"/><rect x="362.5" y="278.7" width="1.2" height="5.0" fill="#2a8cff"/><rect x="366.3" y="270.4" width="1.2" height="8.0" fill="#ff1a1a"/><rect x="370.1" y="263.0" width="1.2" height="4.6" fill="#ff1a1a"/><rect x="372.0" y="260.7" width="2" height="1.6" fill="#e6d25a"/><rect x="377.7" y="257.2" width="1.2" height="3.8" fill="#2a8cff"/><rect x="379.6" y="259.6" width="2" height="1.6" fill="#e6d25a"/><rect x="381.5" y="262.4" width="2" height="1.6" fill="#e6d25a"/><rect x="383.4" y="262.6" width="2" height="1.6" fill="#e6d25a"/><rect x="385.3" y="261.6" width="1.2" height="3.8" fill="#2a8cff"/><rect x="387.2" y="264.1" width="1.2" height="3.1" fill="#2a8cff"/><rect x="391.0" y="267.7" width="2" height="1.6" fill="#e6d25a"/><rect x="392.9" y="267.9" width="1.2" height="3.6" fill="#2a8cff"/><rect x="394.8" y="269.8" width="1.2" height="7.0" fill="#2a8cff"/><rect x="396.7" y="270.9" width="1.2" height="4.2" fill="#2a8cff"/><rect x="398.6" y="274.1" width="1.2" height="5.6" fill="#2a8cff"/><rect x="400.5" y="276.0" width="1.2" height="8.3" fill="#2a8cff"/><rect x="404.3" y="276.7" width="1.2" height="11.0" fill="#ff1a1a"/><rect x="408.1" y="245.8" width="2" height="1.6" fill="#e6d25a"/><rect x="411.9" y="236.4" width="1.2" height="8.2" fill="#ff1a1a"/><rect x="413.8" y="236.6" width="2" height="1.6" fill="#e6d25a"/><rect x="415.7" y="236.7" width="2" height="1.6" fill="#e6d25a"/><rect x="419.5" y="233.3" width="1.2" height="4.7" fill="#ff1a1a"/><rect x="421.4" y="229.3" width="2" height="1.6" fill="#e6d25a"/><rect x="423.3" y="225.7" width="2" height="1.6" fill="#e6d25a"/><rect x="432.8" y="218.5" width="1.2" height="10.0" fill="#2a8cff"/><rect x="434.7" y="224.7" width="1.2" height="10.9" fill="#2a8cff"/><rect x="436.6" y="231.7" width="1.2" height="7.9" fill="#2a8cff"/><rect x="440.4" y="238.1" width="1.2" height="5.0" fill="#2a8cff"/><rect x="442.3" y="240.9" width="1.2" height="5.0" fill="#2a8cff"/><rect x="444.2" y="244.6" width="1.2" height="5.3" fill="#2a8cff"/><rect x="446.1" y="247.4" width="1.2" height="5.0" fill="#2a8cff"/><rect x="451.8" y="240.4" width="2" height="1.6" fill="#e6d25a"/><rect x="453.7" y="233.5" width="1.2" height="8.8" fill="#ff1a1a"/><rect x="455.6" y="234.0" width="1.2" height="7.2" fill="#2a8cff"/><rect x="457.5" y="238.7" width="1.2" height="11.3" fill="#2a8cff"/><rect x="459.4" y="248.1" width="1.2" height="10.8" fill="#2a8cff"/><rect x="461.3" y="257.0" width="1.2" height="3.9" fill="#2a8cff"/><rect x="465.1" y="255.5" width="1.2" height="3.1" fill="#ff1a1a"/><rect x="467.0" y="250.8" width="1.2" height="5.8" fill="#ff1a1a"/><rect x="472.7" y="266.1" width="1.2" height="5.9" fill="#2a8cff"/><rect x="474.6" y="266.8" width="1.2" height="6.0" fill="#ff1a1a"/><rect x="478.4" y="260.7" width="2" height="1.6" fill="#e6d25a"/><rect x="480.3" y="257.7" width="2" height="1.6" fill="#e6d25a"/><rect x="482.2" y="255.2" width="1.2" height="4.6" fill="#ff1a1a"/><rect x="484.1" y="252.8" width="1.2" height="4.4" fill="#ff1a1a"/><rect x="486.0" y="251.1" width="1.2" height="3.5" fill="#ff1a1a"/><rect x="487.9" y="249.2" width="1.2" height="4.2" fill="#ff1a1a"/><rect x="489.8" y="249.2" width="1.2" height="2.0" fill="#2a8cff"/><rect x="491.7" y="249.9" width="1.2" height="5.9" fill="#2a8cff"/><rect x="497.4" y="261.0" width="1.2" height="7.0" fill="#2a8cff"/><rect x="499.3" y="265.8" width="1.2" height="13.0" fill="#2a8cff"/><rect x="501.2" y="275.3" width="1.2" height="9.6" fill="#2a8cff"/><rect x="503.1" y="277.0" width="1.2" height="8.6" fill="#ff1a1a"/><rect x="506.9" y="271.9" width="1.2" height="2.9" fill="#ff1a1a"/><rect x="510.7" y="270.2" width="2" height="1.6" fill="#e6d25a"/><rect x="512.6" y="269.7" width="2" height="1.6" fill="#e6d25a"/><rect x="514.5" y="267.9" width="1.2" height="6.0" fill="#ff1a1a"/><rect x="516.4" y="266.2" width="1.2" height="3.9" fill="#ff1a1a"/><rect x="518.3" y="265.5" width="1.2" height="4.0" fill="#2a8cff"/><rect x="520.2" y="268.0" width="1.2" height="5.8" fill="#2a8cff"/><rect x="522.1" y="272.5" width="1.2" height="4.9" fill="#2a8cff"/><rect x="529.7" y="281.2" width="1.2" height="2.9" fill="#2a8cff"/><rect x="533.5" y="285.7" width="1.2" height="7.1" fill="#2a8cff"/><rect x="537.3" y="297.8" width="1.2" height="3.6" fill="#2a8cff"/><rect x="543.0" y="293.4" width="1.2" height="3.9" fill="#ff1a1a"/><rect x="544.9" y="290.8" width="1.2" height="4.4" fill="#ff1a1a"/><rect x="546.8" y="288.7" width="2" height="1.6" fill="#e6d25a"/><rect x="548.7" y="287.5" width="1.2" height="2.7" fill="#ff1a1a"/><rect x="550.6" y="285.4" width="1.2" height="4.7" fill="#ff1a1a"/><rect x="552.5" y="281.4" width="1.2" height="6.4" fill="#ff1a1a"/><rect x="554.4" y="277.4" width="1.2" height="5.8" fill="#ff1a1a"/><rect x="556.3" y="273.8" width="2" height="1.6" fill="#e6d25a"/><rect x="558.2" y="272.9" width="2" height="1.6" fill="#e6d25a"/><rect x="562.0" y="273.5" width="2" height="1.6" fill="#e6d25a"/><rect x="563.9" y="273.7" width="2" height="1.6" fill="#e6d25a"/><rect x="565.8" y="270.0" width="1.2" height="5.6" fill="#ff1a1a"/><rect x="567.7" y="271.8" width="1.2" height="2.8" fill="#2a8cff"/><rect x="569.6" y="271.7" width="1.2" height="5.5" fill="#ff1a1a"/><rect x="571.5" y="270.1" width="1.2" height="3.1" fill="#ff1a1a"/><rect x="575.3" y="270.8" width="2" height="1.6" fill="#e6d25a"/><rect x="577.2" y="269.4" width="1.2" height="3.5" fill="#ff1a1a"/><rect x="579.1" y="270.6" width="2" height="1.6" fill="#e6d25a"/><rect x="582.9" y="270.3" width="1.2" height="6.4" fill="#2a8cff"/><rect x="588.6" y="289.0" width="1.2" height="10.7" fill="#2a8cff"/><rect x="590.5" y="298.2" width="1.2" height="9.4" fill="#2a8cff"/><rect x="592.4" y="297.5" width="1.2" height="10.4" fill="#ff1a1a"/><rect x="594.3" y="284.6" width="1.2" height="14.6" fill="#ff1a1a"/><rect x="596.2" y="278.6" width="1.2" height="9.8" fill="#ff1a1a"/><rect x="598.1" y="280.0" width="1.2" height="3.5" fill="#ff1a1a"/><rect x="600.0" y="275.6" width="2" height="1.6" fill="#e6d25a"/><rect x="611.4" y="257.7" width="1.2" height="8.6" fill="#ff1a1a"/><rect x="613.3" y="250.8" width="1.2" height="8.6" fill="#ff1a1a"/><rect x="615.2" y="244.0" width="1.2" height="9.5" fill="#ff1a1a"/><rect x="617.1" y="243.4" width="1.2" height="12.7" fill="#2a8cff"/><rect x="619.0" y="252.5" width="1.2" height="16.6" fill="#2a8cff"/><rect x="622.8" y="275.6" width="2" height="1.6" fill="#e6d25a"/><rect x="624.7" y="274.9" width="1.2" height="6.1" fill="#2a8cff"/><rect x="626.6" y="278.8" width="1.2" height="4.4" fill="#2a8cff"/><rect x="628.5" y="279.3" width="1.2" height="8.1" fill="#2a8cff"/><rect x="630.4" y="285.3" width="1.2" height="3.7" fill="#2a8cff"/><rect x="634.2" y="289.3" width="1.2" height="3.2" fill="#2a8cff"/><rect x="636.1" y="290.2" width="1.2" height="3.5" fill="#2a8cff"/><rect x="638.0" y="295.7" width="2" height="1.6" fill="#e6d25a"/><rect x="639.9" y="300.1" width="2" height="1.6" fill="#e6d25a"/><rect x="645.6" y="307.9" width="1.2" height="5.8" fill="#2a8cff"/><rect x="647.5" y="311.5" width="1.2" height="7.8" fill="#2a8cff"/><rect x="649.4" y="320.6" width="2" height="1.6" fill="#e6d25a"/><rect x="653.2" y="319.0" width="1.2" height="3.1" fill="#ff1a1a"/><rect x="655.1" y="318.1" width="1.2" height="4.6" fill="#ff1a1a"/><rect x="660.8" y="319.4" width="2" height="1.6" fill="#e6d25a"/><rect x="662.7" y="318.9" width="1.2" height="5.3" fill="#2a8cff"/><rect x="664.6" y="322.1" width="1.2" height="4.6" fill="#2a8cff"/><rect x="666.5" y="325.6" width="1.2" height="7.3" fill="#2a8cff"/><rect x="668.4" y="327.2" width="1.2" height="2.8" fill="#2a8cff"/><rect x="670.3" y="329.0" width="2" height="1.6" fill="#e6d25a"/><rect x="672.2" y="329.5" width="2" height="1.6" fill="#e6d25a"/><rect x="676.0" y="330.3" width="1.2" height="3.0" fill="#ff1a1a"/><rect x="681.7" y="318.2" width="2" height="1.6" fill="#e6d25a"/><rect x="683.6" y="311.6" width="2" height="1.6" fill="#e6d25a"/><rect x="687.4" y="299.4" width="1.2" height="5.6" fill="#ff1a1a"/><rect x="689.3" y="295.0" width="2" height="1.6" fill="#e6d25a"/><rect x="693.1" y="290.9" width="1.2" height="8.5" fill="#2a8cff"/><rect x="698.8" y="316.5" width="2" height="1.6" fill="#e6d25a"/><rect x="700.7" y="316.1" width="1.2" height="8.6" fill="#2a8cff"/><rect x="704.5" y="317.7" width="1.2" height="8.4" fill="#ff1a1a"/><rect x="706.4" y="319.4" width="1.2" height="3.8" fill="#ff1a1a"/><rect x="708.3" y="316.9" width="1.2" height="4.6" fill="#ff1a1a"/><rect x="710.2" y="317.3" width="2" height="1.6" fill="#e6d25a"/><rect x="712.1" y="314.2" width="1.2" height="10.0" fill="#2a8cff"/><rect x="714.0" y="322.1" width="1.2" height="10.0" fill="#2a8cff"/><rect x="715.9" y="327.2" width="1.2" height="6.0" fill="#2a8cff"/><rect x="717.8" y="330.7" width="1.2" height="6.0" fill="#2a8cff"/><rect x="719.7" y="334.6" width="1.2" height="5.8" fill="#2a8cff"/><rect x="721.6" y="339.3" width="1.2" height="7.1" fill="#2a8cff"/><rect x="723.5" y="340.1" width="1.2" height="7.1" fill="#ff1a1a"/><rect x="725.4" y="328.9" width="2" height="1.6" fill="#e6d25a"/><rect x="729.2" y="312.3" width="1.2" height="10.0" fill="#ff1a1a"/><rect x="731.1" y="308.1" width="1.2" height="5.5" fill="#ff1a1a"/><rect x="733.0" y="303.2" width="1.2" height="6.4" fill="#ff1a1a"/><rect x="736.8" y="310.9" width="2" height="1.6" fill="#e6d25a"/><rect x="744.4" y="297.9" width="1.2" height="5.9" fill="#ff1a1a"/><rect x="746.3" y="292.2" width="1.2" height="7.2" fill="#ff1a1a"/><rect x="748.2" y="285.6" width="1.2" height="8.4" fill="#ff1a1a"/><rect x="750.1" y="282.3" width="1.2" height="6.0" fill="#2a8cff"/><rect x="752.0" y="289.1" width="2" height="1.6" fill="#e6d25a"/><rect x="755.8" y="290.7" width="1.2" height="3.3" fill="#2a8cff"/><rect x="757.7" y="291.9" width="2" height="1.6" fill="#e6d25a"/><rect x="759.6" y="291.1" width="1.2" height="3.0" fill="#ff1a1a"/><rect x="761.5" y="288.5" width="2" height="1.6" fill="#e6d25a"/><rect x="765.3" y="287.5" width="1.2" height="4.2" fill="#ff1a1a"/><rect x="767.2" y="290.9" width="2" height="1.6" fill="#e6d25a"/><rect x="771.0" y="292.1" width="2" height="1.6" fill="#e6d25a"/><rect x="774.8" y="288.5" width="1.2" height="3.7" fill="#ff1a1a"/><rect x="778.6" y="284.9" width="2" height="1.6" fill="#e6d25a"/><rect x="780.5" y="280.9" width="1.2" height="5.3" fill="#ff1a1a"/><rect x="784.3" y="270.2" width="2" height="1.6" fill="#e6d25a"/><rect x="786.2" y="266.6" width="2" height="1.6" fill="#e6d25a"/><rect x="788.1" y="260.5" width="1.2" height="7.4" fill="#ff1a1a"/><rect x="790.0" y="264.6" width="1.2" height="18.2" fill="#2a8cff"/><rect x="791.9" y="281.1" width="1.2" height="5.9" fill="#2a8cff"/><rect x="795.7" y="286.6" width="1.2" height="4.5" fill="#2a8cff"/><rect x="799.5" y="291.7" width="1.2" height="4.3" fill="#2a8cff"/><rect x="801.4" y="294.3" width="1.2" height="3.6" fill="#2a8cff"/><rect x="807.1" y="300.7" width="2" height="1.6" fill="#e6d25a"/><rect x="831.8" y="316.6" width="2" height="1.6" fill="#e6d25a"/><rect x="835.6" y="308.4" width="1.2" height="5.5" fill="#ff1a1a"/><rect x="839.4" y="305.6" width="1.2" height="6.4" fill="#ff1a1a"/><rect x="847.0" y="302.7" width="1.2" height="3.4" fill="#2a8cff"/><rect x="862.2" y="303.6" width="2" height="1.6" fill="#e6d25a"/><rect x="879.3" y="308.7" width="1.2" height="3.5" fill="#ff1a1a"/><rect x="886.9" y="303.4" width="1.2" height="6.5" fill="#ff1a1a"/><rect x="900.2" y="292.7" width="2" height="1.6" fill="#e6d25a"/><rect x="919.2" y="290.3" width="1.2" height="3.0" fill="#2a8cff"/><rect x="938.2" y="292.1" width="1.2" height="3.2" fill="#ff1a1a"/><rect x="947.7" y="284.2" width="2" height="1.6" fill="#e6d25a"/><rect x="949.6" y="282.3" width="1.2" height="4.0" fill="#ff1a1a"/><rect x="964.8" y="291.7" width="1.2" height="4.6" fill="#2a8cff"/></g>
<rect x="676" y="328" width="1.3" height="32" fill="#ff1a1a"/><rect x="616.5" y="241" width="1.3" height="14" fill="#ff1a1a"/><rect x="614.5" y="252" width="1.3" height="8" fill="#2a8cff"/>
</svg></body></html>
